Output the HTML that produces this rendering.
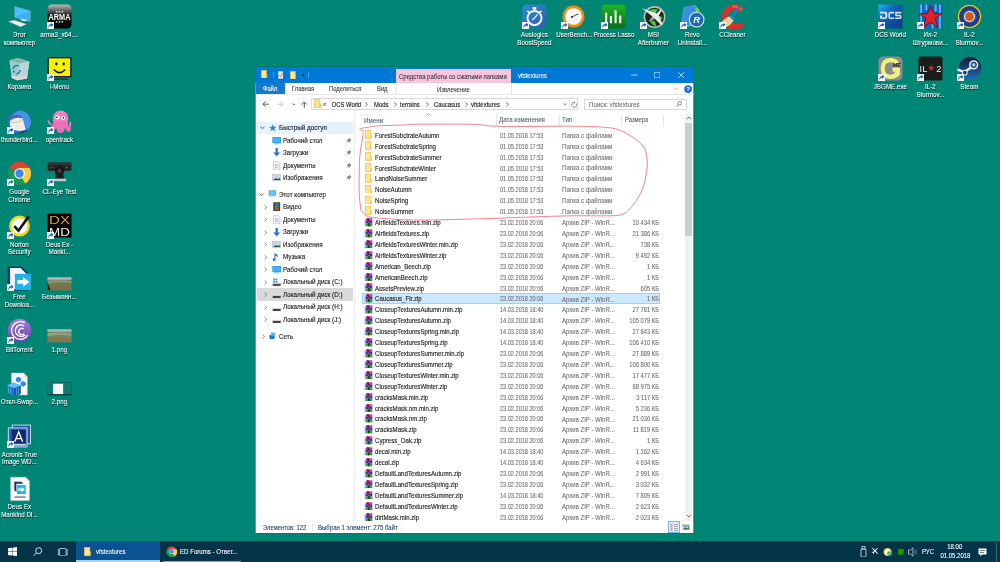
<!DOCTYPE html>
<html><head><meta charset="utf-8"><title>vfstextures</title>
<style>
html,body{margin:0;padding:0;}
body{width:1000px;height:562px;overflow:hidden;background:#018574;position:relative;font-family:'Liberation Sans', sans-serif;}
.b{position:absolute;display:block;}
.t{position:absolute;white-space:nowrap;font-family:'Liberation Sans', sans-serif;}
</style></head><body>
<div style="position:absolute;left:0;top:0;width:1000px;height:562px;will-change:transform">
<svg class="b" style="left:7.30px;top:3.60px" width="25.00" height="25.00" viewBox="0 0 48 48"><path d="M14.5 4.5 L45 13 V34 L14.5 25.5 Z" fill="#3fb4f8" stroke="#9a9a9a" stroke-width="0.8"/><path d="M16 6.5 L43.5 14.2 V32 L16 24.3 Z" fill="#49c0fc"/><path d="M16 24.3 L43.5 14.2 V32 Z" fill="#3ab0f2"/><path d="M3 33.5 L14 31 L37 39 L26 43.5 Z" fill="#ececec" stroke="#c8c8c8" stroke-width="0.6"/><path d="M24 30 L31 28.5 L40 31.5 L33 33 Z" fill="#e6e6e6"/></svg>
<div class="t" style="left:-2.60px;width:44.80px;text-align:center;transform:scaleX(0.8929);transform-origin:50% 0;top:30.98px;font-size:7.00px;line-height:7.00px;color:#fff;-webkit-text-stroke:0.08px #fff;text-shadow:0.4px 0.5px 0.8px rgba(0,0,0,.85);">Этот</div>
<div class="t" style="left:-2.60px;width:44.80px;text-align:center;transform:scaleX(0.8929);transform-origin:50% 0;top:38.68px;font-size:7.00px;line-height:7.00px;color:#fff;-webkit-text-stroke:0.08px #fff;text-shadow:0.4px 0.5px 0.8px rgba(0,0,0,.85);">компьютер</div>
<svg class="b" style="left:7.30px;top:56.05px" width="25.00" height="25.00" viewBox="0 0 48 48"><path d="M4.5 8 L21 4 L43 10.5 L38.5 43 L19 46.5 L9 42 Z" fill="#9fcbc4"/><path d="M4.5 8 L21 4 L43 10.5 L25 14 Z" fill="#7fb8b0"/><path d="M25 14 L43 10.5 L38.5 43 L19 46.5 Z" fill="#b5d8d2"/><path d="M9 36 L19 40 L38.5 37 L38.5 43 L19 46.5 L9 42 Z" fill="#e0d6d6"/><path d="M12 25 A7 7 0 0 1 22 19 M25 27 A7 7 0 0 1 18 34 M14 32 L12 28" stroke="#1f7de0" stroke-width="3.2" fill="none"/></svg>
<div class="t" style="left:-2.60px;width:44.80px;text-align:center;transform:scaleX(0.8929);transform-origin:50% 0;top:83.43px;font-size:7.00px;line-height:7.00px;color:#fff;-webkit-text-stroke:0.08px #fff;text-shadow:0.4px 0.5px 0.8px rgba(0,0,0,.85);">Корзина</div>
<svg class="b" style="left:7.30px;top:108.50px" width="25.00" height="25.00" viewBox="0 0 48 48"><circle cx="24" cy="25" r="22" fill="#2f6fc8"/><path d="M24 3 A22 22 0 0 1 40 40 Q30 30 28 14 Q20 8 12 14 Q10 8 24 3 Z" fill="#4b93e0"/><path d="M40 40 A22 22 0 0 1 20 46.5 Q34 42 40 40 Z" fill="#173f8f"/><path d="M6 22 Q16 14 30 18 L36 40 Q26 44 10 40 Q4 32 6 22 Z" fill="#f1ede4"/><path d="M6 24 Q18 30 30 20" stroke="#cfc8bb" stroke-width="2" fill="none"/><circle cx="15" cy="14" r="1.5" fill="#c33"/></svg>
<svg class="b" style="left:7.00px;top:126.70px" width="7.00" height="7.00" viewBox="0 0 12 12"><rect x="0" y="0" width="12" height="12" fill="#fff"/><path d="M2 11 C2 5.5 4.5 3.5 7.5 3.5 V1 L11 4.8 L7.5 8.6 V6 C5 6 3.5 7.5 2 11 Z" fill="#1a5cc8"/></svg>
<div class="t" style="left:-2.60px;width:44.80px;text-align:center;transform:scaleX(0.8929);transform-origin:50% 0;top:135.88px;font-size:7.00px;line-height:7.00px;color:#fff;-webkit-text-stroke:0.08px #fff;text-shadow:0.4px 0.5px 0.8px rgba(0,0,0,.85);">thunderbird...</div>
<svg class="b" style="left:7.30px;top:160.95px" width="25.00" height="25.00" viewBox="0 0 48 48"><circle cx="24" cy="24" r="22" fill="#db4437"/><path d="M24 24 L43.05 35 A22 22 0 0 1 13 43.05 Z" fill="#0f9d58"/><path d="M24 24 L13 43.05 A22 22 0 0 1 4.95 13 L24 13 Z" fill="#0f9d58"/><path d="M24 13 H43.05 A22 22 0 0 1 35 43.05 L24 24 Z" fill="#ffcd40"/><path d="M24 2 A22 22 0 0 1 43.05 13 H24 A11 11 0 0 0 14.5 18.5 L4.95 13 A22 22 0 0 1 24 2 Z" fill="#db4437"/><circle cx="24" cy="24" r="10" fill="#fff"/><circle cx="24" cy="24" r="8" fill="#4285f4"/></svg>
<svg class="b" style="left:7.00px;top:179.15px" width="7.00" height="7.00" viewBox="0 0 12 12"><rect x="0" y="0" width="12" height="12" fill="#fff"/><path d="M2 11 C2 5.5 4.5 3.5 7.5 3.5 V1 L11 4.8 L7.5 8.6 V6 C5 6 3.5 7.5 2 11 Z" fill="#1a5cc8"/></svg>
<div class="t" style="left:-2.60px;width:44.80px;text-align:center;transform:scaleX(0.8929);transform-origin:50% 0;top:188.33px;font-size:7.00px;line-height:7.00px;color:#fff;-webkit-text-stroke:0.08px #fff;text-shadow:0.4px 0.5px 0.8px rgba(0,0,0,.85);">Google</div>
<div class="t" style="left:-2.60px;width:44.80px;text-align:center;transform:scaleX(0.8929);transform-origin:50% 0;top:196.03px;font-size:7.00px;line-height:7.00px;color:#fff;-webkit-text-stroke:0.08px #fff;text-shadow:0.4px 0.5px 0.8px rgba(0,0,0,.85);">Chrome</div>
<svg class="b" style="left:7.30px;top:213.40px" width="25.00" height="25.00" viewBox="0 0 48 48"><circle cx="24" cy="25" r="20" fill="#f8d51a"/><circle cx="24" cy="25" r="15" fill="#fff"/><path d="M14 25 L22 34 L42 6" stroke="#111" stroke-width="5" fill="none"/></svg>
<svg class="b" style="left:7.00px;top:231.60px" width="7.00" height="7.00" viewBox="0 0 12 12"><rect x="0" y="0" width="12" height="12" fill="#fff"/><path d="M2 11 C2 5.5 4.5 3.5 7.5 3.5 V1 L11 4.8 L7.5 8.6 V6 C5 6 3.5 7.5 2 11 Z" fill="#1a5cc8"/></svg>
<div class="t" style="left:-2.60px;width:44.80px;text-align:center;transform:scaleX(0.8929);transform-origin:50% 0;top:240.78px;font-size:7.00px;line-height:7.00px;color:#fff;-webkit-text-stroke:0.08px #fff;text-shadow:0.4px 0.5px 0.8px rgba(0,0,0,.85);">Norton</div>
<div class="t" style="left:-2.60px;width:44.80px;text-align:center;transform:scaleX(0.8929);transform-origin:50% 0;top:248.48px;font-size:7.00px;line-height:7.00px;color:#fff;-webkit-text-stroke:0.08px #fff;text-shadow:0.4px 0.5px 0.8px rgba(0,0,0,.85);">Security</div>
<svg class="b" style="left:7.30px;top:265.85px" width="25.00" height="25.00" viewBox="0 0 48 48"><path d="M1 1 H28 L39 12 V47 H1 Z" fill="#0d3a78"/><path d="M6 4 H26 L38 16 V44 H6 Z" fill="#f4f8fb"/><rect x="15" y="15" width="31" height="31" fill="#1fb6e6"/><path d="M20 27 H31 V21 L43 30.5 L31 40 V34 H20 Z" fill="#fff"/></svg>
<svg class="b" style="left:7.00px;top:284.05px" width="7.00" height="7.00" viewBox="0 0 12 12"><rect x="0" y="0" width="12" height="12" fill="#fff"/><path d="M2 11 C2 5.5 4.5 3.5 7.5 3.5 V1 L11 4.8 L7.5 8.6 V6 C5 6 3.5 7.5 2 11 Z" fill="#1a5cc8"/></svg>
<div class="t" style="left:-2.60px;width:44.80px;text-align:center;transform:scaleX(0.8929);transform-origin:50% 0;top:293.23px;font-size:7.00px;line-height:7.00px;color:#fff;-webkit-text-stroke:0.08px #fff;text-shadow:0.4px 0.5px 0.8px rgba(0,0,0,.85);">Free</div>
<div class="t" style="left:-2.60px;width:44.80px;text-align:center;transform:scaleX(0.8929);transform-origin:50% 0;top:300.93px;font-size:7.00px;line-height:7.00px;color:#fff;-webkit-text-stroke:0.08px #fff;text-shadow:0.4px 0.5px 0.8px rgba(0,0,0,.85);">Downloa...</div>
<svg class="b" style="left:7.30px;top:318.30px" width="25.00" height="25.00" viewBox="0 0 48 48"><defs><linearGradient id="bg" x1="0" y1="0" x2="0" y2="1"><stop offset="0" stop-color="#a27ad8"/><stop offset="1" stop-color="#6c44b0"/></linearGradient></defs><circle cx="24" cy="24" r="22.5" fill="url(#bg)"/><path d="M34 9 A17 17 0 1 0 40 33" stroke="#fff" stroke-width="2.6" fill="none"/><path d="M33 15 A11 11 0 1 0 35 32" stroke="#fff" stroke-width="2.6" fill="none"/><path d="M32 21 A6 6 0 1 0 33 30" stroke="#fff" stroke-width="2.6" fill="none"/></svg>
<svg class="b" style="left:7.00px;top:336.50px" width="7.00" height="7.00" viewBox="0 0 12 12"><rect x="0" y="0" width="12" height="12" fill="#fff"/><path d="M2 11 C2 5.5 4.5 3.5 7.5 3.5 V1 L11 4.8 L7.5 8.6 V6 C5 6 3.5 7.5 2 11 Z" fill="#1a5cc8"/></svg>
<div class="t" style="left:-2.60px;width:44.80px;text-align:center;transform:scaleX(0.8929);transform-origin:50% 0;top:345.68px;font-size:7.00px;line-height:7.00px;color:#fff;-webkit-text-stroke:0.08px #fff;text-shadow:0.4px 0.5px 0.8px rgba(0,0,0,.85);">BitTorrent</div>
<svg class="b" style="left:7.30px;top:370.75px" width="25.00" height="25.00" viewBox="0 0 48 48"><path d="M8.5 4 H32 L39 11 V46 H8.5 Z" fill="#f7f7f7" stroke="#d8d0d0" stroke-width="0.8"/><path d="M32 4 V11 H39 Z" fill="#dcdcdc"/><path d="M0 28 L12 22 L26 28 V44 L14 48 L0 43 Z" fill="#1f6fc8"/><path d="M0 28 L12 22 L26 28 L14 33 Z" fill="#5cc3f5"/><path d="M14 33 L26 28 V44 L14 48 Z" fill="#1750a8"/><path d="M3 31 V42 M7 32.5 V44 M18 31.5 V46 M22 30 V45" stroke="#7fd3f8" stroke-width="1.5" opacity=".7"/><path d="M17 14 L22 11 L27 14 V19 L22 22 L17 19 Z" fill="#2d8ae0"/><path d="M26 22 L31 19 L36 22 V27 L31 30 L26 27 Z" fill="#2d8ae0"/></svg>
<div class="t" style="left:-2.60px;width:44.80px;text-align:center;transform:scaleX(0.8929);transform-origin:50% 0;top:398.13px;font-size:7.00px;line-height:7.00px;color:#fff;-webkit-text-stroke:0.08px #fff;text-shadow:0.4px 0.5px 0.8px rgba(0,0,0,.85);">Откл-Swap...</div>
<svg class="b" style="left:7.30px;top:423.20px" width="25.00" height="25.00" viewBox="0 0 48 48"><rect x="10" y="4" width="35" height="36" fill="#1f56a8" stroke="#e8eef5" stroke-width="1.6"/><rect x="2.5" y="9.5" width="36" height="36.5" fill="#2a64b8" stroke="#e8eef5" stroke-width="1.6"/><rect x="9" y="13" width="27" height="26" fill="#0f2a6e"/><path d="M15 36 L22.5 17 L30 36 M18 30 H27" stroke="#fff" stroke-width="2.6" fill="none"/><rect x="6" y="40.5" width="30" height="3" fill="#d6e2f0"/></svg>
<svg class="b" style="left:7.00px;top:441.40px" width="7.00" height="7.00" viewBox="0 0 12 12"><rect x="0" y="0" width="12" height="12" fill="#fff"/><path d="M2 11 C2 5.5 4.5 3.5 7.5 3.5 V1 L11 4.8 L7.5 8.6 V6 C5 6 3.5 7.5 2 11 Z" fill="#1a5cc8"/></svg>
<div class="t" style="left:-2.60px;width:44.80px;text-align:center;transform:scaleX(0.8929);transform-origin:50% 0;top:450.58px;font-size:7.00px;line-height:7.00px;color:#fff;-webkit-text-stroke:0.08px #fff;text-shadow:0.4px 0.5px 0.8px rgba(0,0,0,.85);">Acronis True</div>
<div class="t" style="left:-2.60px;width:44.80px;text-align:center;transform:scaleX(0.8929);transform-origin:50% 0;top:458.28px;font-size:7.00px;line-height:7.00px;color:#fff;-webkit-text-stroke:0.08px #fff;text-shadow:0.4px 0.5px 0.8px rgba(0,0,0,.85);">Image WD...</div>
<svg class="b" style="left:7.30px;top:475.65px" width="25.00" height="25.00" viewBox="0 0 48 48"><path d="M7 2.5 H36 L43 9.5 V47 H7 Z" fill="#fafafa" stroke="#dedede" stroke-width="0.8"/><path d="M36 2.5 V9.5 H43 Z" fill="#e0e0e0"/><path d="M14 11 H28 L31 15 H18 V31 L14 27 Z" fill="#0d3a78"/><rect x="19.5" y="17.5" width="16.5" height="17" fill="#1fb6e6"/><path d="M21 24 H28 V21 L34 26 L28 31 V28 H21 Z" fill="#fff"/><rect x="14.5" y="39.5" width="21.5" height="1.8" fill="#2a3a5a"/></svg>
<div class="t" style="left:-2.60px;width:44.80px;text-align:center;transform:scaleX(0.8929);transform-origin:50% 0;top:503.03px;font-size:7.00px;line-height:7.00px;color:#fff;-webkit-text-stroke:0.08px #fff;text-shadow:0.4px 0.5px 0.8px rgba(0,0,0,.85);">Deus Ex</div>
<div class="t" style="left:-2.60px;width:44.80px;text-align:center;transform:scaleX(0.8929);transform-origin:50% 0;top:510.73px;font-size:7.00px;line-height:7.00px;color:#fff;-webkit-text-stroke:0.08px #fff;text-shadow:0.4px 0.5px 0.8px rgba(0,0,0,.85);">Mankind Di...</div>
<svg class="b" style="left:46.88px;top:3.60px" width="25.00" height="25.00" viewBox="0 0 48 48"><defs><linearGradient id="ag" x1="0" y1="0" x2="0" y2="1"><stop offset="0" stop-color="#bdbdbd"/><stop offset="0.45" stop-color="#1a1a1a"/><stop offset="1" stop-color="#000"/></linearGradient></defs><rect x="1" y="1" width="46" height="46" rx="8" fill="url(#ag)"/><text x="24" y="30" font-size="17" font-weight="bold" text-anchor="middle" fill="#fff" font-family="Liberation Sans" textLength="42" lengthAdjust="spacingAndGlyphs">ARMA</text><path d="M17 14 h3 v2.5 h-3z M22.5 14 h3 v2.5 h-3z M28 14 h3 v2.5 h-3z M17 33 h3 v2.5 h-3z M22.5 33 h3 v2.5 h-3z M28 33 h3 v2.5 h-3z" fill="#fff"/></svg>
<svg class="b" style="left:46.58px;top:21.80px" width="7.00" height="7.00" viewBox="0 0 12 12"><rect x="0" y="0" width="12" height="12" fill="#fff"/><path d="M2 11 C2 5.5 4.5 3.5 7.5 3.5 V1 L11 4.8 L7.5 8.6 V6 C5 6 3.5 7.5 2 11 Z" fill="#1a5cc8"/></svg>
<div class="t" style="left:36.98px;width:44.80px;text-align:center;transform:scaleX(0.8929);transform-origin:50% 0;top:30.98px;font-size:7.00px;line-height:7.00px;color:#fff;-webkit-text-stroke:0.08px #fff;text-shadow:0.4px 0.5px 0.8px rgba(0,0,0,.85);">arma3_x64....</div>
<svg class="b" style="left:46.88px;top:56.05px" width="25.00" height="25.00" viewBox="0 0 48 48"><rect x="1" y="2" width="46" height="39" rx="2" fill="#111"/><rect x="3.5" y="4.5" width="41" height="34" fill="#f5f200"/><ellipse cx="18" cy="15" rx="2.3" ry="3.2" fill="#111"/><ellipse cx="32" cy="15" rx="2.3" ry="3.2" fill="#111"/><path d="M13 26 Q24 38 35 26" stroke="#111" stroke-width="2.8" fill="none"/><rect x="14" y="43" width="26" height="2.5" fill="#2a2a2a"/></svg>
<svg class="b" style="left:46.58px;top:74.25px" width="7.00" height="7.00" viewBox="0 0 12 12"><rect x="0" y="0" width="12" height="12" fill="#fff"/><path d="M2 11 C2 5.5 4.5 3.5 7.5 3.5 V1 L11 4.8 L7.5 8.6 V6 C5 6 3.5 7.5 2 11 Z" fill="#1a5cc8"/></svg>
<div class="t" style="left:36.98px;width:44.80px;text-align:center;transform:scaleX(0.8929);transform-origin:50% 0;top:83.43px;font-size:7.00px;line-height:7.00px;color:#fff;-webkit-text-stroke:0.08px #fff;text-shadow:0.4px 0.5px 0.8px rgba(0,0,0,.85);">i-Menu</div>
<svg class="b" style="left:46.88px;top:108.50px" width="25.00" height="25.00" viewBox="0 0 48 48"><ellipse cx="26" cy="18" rx="15" ry="15" fill="#f27cc0"/><path d="M12 24 Q10 34 4 36 Q4 44 14 42 Q16 38 18 36 Q18 46 26 46 Q34 46 34 36 Q36 40 40 44 Q47 44 46 36 Q40 34 40 24 Z" fill="#ee6db8"/><path d="M2 22 Q4 28 8 30 M44 24 Q46 30 44 34" stroke="#f48ac8" stroke-width="3" fill="none"/><circle cx="20" cy="16" r="4.2" fill="#fff"/><circle cx="31" cy="17" r="3.8" fill="#fff"/><circle cx="19" cy="16" r="1.6" fill="#111"/><circle cx="31.5" cy="17" r="1.5" fill="#111"/></svg>
<svg class="b" style="left:46.58px;top:126.70px" width="7.00" height="7.00" viewBox="0 0 12 12"><rect x="0" y="0" width="12" height="12" fill="#fff"/><path d="M2 11 C2 5.5 4.5 3.5 7.5 3.5 V1 L11 4.8 L7.5 8.6 V6 C5 6 3.5 7.5 2 11 Z" fill="#1a5cc8"/></svg>
<div class="t" style="left:36.98px;width:44.80px;text-align:center;transform:scaleX(0.8929);transform-origin:50% 0;top:135.88px;font-size:7.00px;line-height:7.00px;color:#fff;-webkit-text-stroke:0.08px #fff;text-shadow:0.4px 0.5px 0.8px rgba(0,0,0,.85);">opentrack</div>
<svg class="b" style="left:46.88px;top:160.95px" width="25.00" height="25.00" viewBox="0 0 48 48"><path d="M1 6 Q1 3 5 3 H43 Q47 3 47 6 V16 Q47 19 43 19 H5 Q1 19 1 16 Z" fill="#262626"/><rect x="1" y="3" width="46" height="4" fill="#3a3a3a"/><circle cx="24" cy="19" r="9" fill="#151515"/><circle cx="24" cy="19" r="4.5" fill="#3d3d3d"/><rect x="16" y="26" width="16" height="8" fill="#1e1e1e"/><rect x="11" y="34" width="26" height="5" rx="2" fill="#c8c8c8"/><circle cx="9" cy="12" r="1.3" fill="#e33"/><circle cx="38" cy="12" r="1.3" fill="#39f"/></svg>
<svg class="b" style="left:46.58px;top:179.15px" width="7.00" height="7.00" viewBox="0 0 12 12"><rect x="0" y="0" width="12" height="12" fill="#fff"/><path d="M2 11 C2 5.5 4.5 3.5 7.5 3.5 V1 L11 4.8 L7.5 8.6 V6 C5 6 3.5 7.5 2 11 Z" fill="#1a5cc8"/></svg>
<div class="t" style="left:36.98px;width:44.80px;text-align:center;transform:scaleX(0.8929);transform-origin:50% 0;top:188.33px;font-size:7.00px;line-height:7.00px;color:#fff;-webkit-text-stroke:0.08px #fff;text-shadow:0.4px 0.5px 0.8px rgba(0,0,0,.85);">CL-Eye Test</div>
<svg class="b" style="left:46.88px;top:213.40px" width="25.00" height="25.00" viewBox="0 0 48 48"><rect x="1" y="1" width="46" height="46" fill="#050505"/><text x="24" y="22" font-size="22" text-anchor="middle" fill="#d9a441" font-family="Liberation Sans" textLength="40" lengthAdjust="spacingAndGlyphs">DX</text><text x="24" y="44" font-size="22" text-anchor="middle" fill="#f2f2f2" font-family="Liberation Sans" textLength="40" lengthAdjust="spacingAndGlyphs">MD</text></svg>
<svg class="b" style="left:46.58px;top:231.60px" width="7.00" height="7.00" viewBox="0 0 12 12"><rect x="0" y="0" width="12" height="12" fill="#fff"/><path d="M2 11 C2 5.5 4.5 3.5 7.5 3.5 V1 L11 4.8 L7.5 8.6 V6 C5 6 3.5 7.5 2 11 Z" fill="#1a5cc8"/></svg>
<div class="t" style="left:36.98px;width:44.80px;text-align:center;transform:scaleX(0.8929);transform-origin:50% 0;top:240.78px;font-size:7.00px;line-height:7.00px;color:#fff;-webkit-text-stroke:0.08px #fff;text-shadow:0.4px 0.5px 0.8px rgba(0,0,0,.85);">Deus Ex -</div>
<div class="t" style="left:36.98px;width:44.80px;text-align:center;transform:scaleX(0.8929);transform-origin:50% 0;top:248.48px;font-size:7.00px;line-height:7.00px;color:#fff;-webkit-text-stroke:0.08px #fff;text-shadow:0.4px 0.5px 0.8px rgba(0,0,0,.85);">Manki...</div>
<svg class="b" style="left:46.88px;top:265.85px" width="25.00" height="25.00" viewBox="0 0 48 48"><rect x="1" y="21.5" width="46" height="25" fill="#6e7a55"/><rect x="1" y="21.5" width="46" height="5" fill="#a9b5b8"/><path d="M1 28 Q20 25 47 29 V33 Q24 30 1 34 Z" fill="#8a9470"/><path d="M1 38 Q22 35 47 40 V46.5 H1 Z" fill="#7d7048"/><path d="M1 30 L7 46.5 H1 Z" fill="#3a2415"/></svg>
<div class="t" style="left:36.98px;width:44.80px;text-align:center;transform:scaleX(0.8929);transform-origin:50% 0;top:293.23px;font-size:7.00px;line-height:7.00px;color:#fff;-webkit-text-stroke:0.08px #fff;text-shadow:0.4px 0.5px 0.8px rgba(0,0,0,.85);">Безымянн...</div>
<svg class="b" style="left:46.88px;top:318.30px" width="25.00" height="25.00" viewBox="0 0 48 48"><rect x="1" y="21.5" width="46" height="25" fill="#77845d"/><rect x="1" y="21.5" width="46" height="5" fill="#a5b4bb"/><path d="M1 29 Q24 26 47 30 V34 Q24 31 1 35 Z" fill="#93a07a"/><path d="M1 39 Q22 36 47 41 V46.5 H1 Z" fill="#827552"/></svg>
<div class="t" style="left:36.98px;width:44.80px;text-align:center;transform:scaleX(0.8929);transform-origin:50% 0;top:345.68px;font-size:7.00px;line-height:7.00px;color:#fff;-webkit-text-stroke:0.08px #fff;text-shadow:0.4px 0.5px 0.8px rgba(0,0,0,.85);">1.png</div>
<svg class="b" style="left:46.88px;top:370.75px" width="25.00" height="25.00" viewBox="0 0 48 48"><rect x="0.5" y="21.5" width="46" height="25" fill="#0a7d6c" stroke="#0b5d55" stroke-width="1"/><rect x="11.5" y="24.5" width="19.5" height="20" fill="#f8f8f8"/><rect x="0.5" y="44.5" width="46" height="2" fill="#0b3b48"/></svg>
<div class="t" style="left:36.98px;width:44.80px;text-align:center;transform:scaleX(0.8929);transform-origin:50% 0;top:398.13px;font-size:7.00px;line-height:7.00px;color:#fff;-webkit-text-stroke:0.08px #fff;text-shadow:0.4px 0.5px 0.8px rgba(0,0,0,.85);">2.png</div>
<svg class="b" style="left:521.84px;top:3.60px" width="25.00" height="25.00" viewBox="0 0 48 48"><defs><linearGradient id="au" x1="0" y1="0" x2="1" y2="1"><stop offset="0" stop-color="#2f8ad6"/><stop offset="1" stop-color="#2a5fa8"/></linearGradient></defs><rect x="1" y="1" width="46" height="46" rx="8" fill="url(#au)"/><circle cx="24" cy="27" r="13.5" stroke="#fff" stroke-width="3.6" fill="none"/><rect x="20.5" y="6" width="7" height="4" fill="#fff"/><rect x="22.5" y="9" width="3" height="4" fill="#fff"/><path d="M10.5 13 L14 16.5 M37.5 13 L34 16.5" stroke="#fff" stroke-width="3"/><path d="M20 31 L30 20" stroke="#fff" stroke-width="2.6"/></svg>
<svg class="b" style="left:521.54px;top:21.80px" width="7.00" height="7.00" viewBox="0 0 12 12"><rect x="0" y="0" width="12" height="12" fill="#fff"/><path d="M2 11 C2 5.5 4.5 3.5 7.5 3.5 V1 L11 4.8 L7.5 8.6 V6 C5 6 3.5 7.5 2 11 Z" fill="#1a5cc8"/></svg>
<div class="t" style="left:511.94px;width:44.80px;text-align:center;transform:scaleX(0.8929);transform-origin:50% 0;top:30.98px;font-size:7.00px;line-height:7.00px;color:#fff;-webkit-text-stroke:0.08px #fff;text-shadow:0.4px 0.5px 0.8px rgba(0,0,0,.85);">Auslogics</div>
<div class="t" style="left:511.94px;width:44.80px;text-align:center;transform:scaleX(0.8929);transform-origin:50% 0;top:38.68px;font-size:7.00px;line-height:7.00px;color:#fff;-webkit-text-stroke:0.08px #fff;text-shadow:0.4px 0.5px 0.8px rgba(0,0,0,.85);">BoostSpeed</div>
<svg class="b" style="left:561.42px;top:3.60px" width="25.00" height="25.00" viewBox="0 0 48 48"><circle cx="24" cy="24" r="21" fill="#f58a0c"/><circle cx="24" cy="24" r="16" fill="#fafafa"/><path d="M20 25 L34 19" stroke="#333" stroke-width="1.6"/><circle cx="21" cy="25" r="2" fill="#333"/></svg>
<svg class="b" style="left:561.12px;top:21.80px" width="7.00" height="7.00" viewBox="0 0 12 12"><rect x="0" y="0" width="12" height="12" fill="#fff"/><path d="M2 11 C2 5.5 4.5 3.5 7.5 3.5 V1 L11 4.8 L7.5 8.6 V6 C5 6 3.5 7.5 2 11 Z" fill="#1a5cc8"/></svg>
<div class="t" style="left:551.52px;width:44.80px;text-align:center;transform:scaleX(0.8929);transform-origin:50% 0;top:30.98px;font-size:7.00px;line-height:7.00px;color:#fff;-webkit-text-stroke:0.08px #fff;text-shadow:0.4px 0.5px 0.8px rgba(0,0,0,.85);">UserBench...</div>
<svg class="b" style="left:601.00px;top:3.60px" width="25.00" height="25.00" viewBox="0 0 48 48"><defs><linearGradient id="la" x1="0" y1="0" x2="0" y2="1"><stop offset="0" stop-color="#1fb52a"/><stop offset="1" stop-color="#0a6e16"/></linearGradient></defs><rect x="1" y="1" width="46" height="46" rx="7" fill="url(#la)"/><path d="M10 37 V17 M19 37 V23 M28 37 V12 M37 37 V22" stroke="#fff" stroke-width="3.8"/></svg>
<svg class="b" style="left:600.70px;top:21.80px" width="7.00" height="7.00" viewBox="0 0 12 12"><rect x="0" y="0" width="12" height="12" fill="#fff"/><path d="M2 11 C2 5.5 4.5 3.5 7.5 3.5 V1 L11 4.8 L7.5 8.6 V6 C5 6 3.5 7.5 2 11 Z" fill="#1a5cc8"/></svg>
<div class="t" style="left:591.10px;width:44.80px;text-align:center;transform:scaleX(0.8929);transform-origin:50% 0;top:30.98px;font-size:7.00px;line-height:7.00px;color:#fff;-webkit-text-stroke:0.08px #fff;text-shadow:0.4px 0.5px 0.8px rgba(0,0,0,.85);">Process Lasso</div>
<svg class="b" style="left:640.58px;top:3.60px" width="25.00" height="25.00" viewBox="0 0 48 48"><circle cx="26" cy="25" r="21" fill="#bdbdbd"/><circle cx="26" cy="25" r="18" fill="#1c2a1c"/><path d="M14 14 Q22 8 32 10 L26 22 Z M30 30 Q38 34 42 26 L34 22 Z M18 34 Q22 42 30 42 L26 32 Z" fill="#3fd43f"/><path d="M2 8 L30 18 L38 10 L40 12 L34 22 L42 40 L38 40 L26 28 L18 34 L16 32 L22 24 Z" fill="#e9e9e9"/><path d="M22 24 L26 28 L18 34 L16 32 Z" fill="#9a9a9a"/></svg>
<svg class="b" style="left:640.28px;top:21.80px" width="7.00" height="7.00" viewBox="0 0 12 12"><rect x="0" y="0" width="12" height="12" fill="#fff"/><path d="M2 11 C2 5.5 4.5 3.5 7.5 3.5 V1 L11 4.8 L7.5 8.6 V6 C5 6 3.5 7.5 2 11 Z" fill="#1a5cc8"/></svg>
<div class="t" style="left:630.68px;width:44.80px;text-align:center;transform:scaleX(0.8929);transform-origin:50% 0;top:30.98px;font-size:7.00px;line-height:7.00px;color:#fff;-webkit-text-stroke:0.08px #fff;text-shadow:0.4px 0.5px 0.8px rgba(0,0,0,.85);">MSI</div>
<div class="t" style="left:630.68px;width:44.80px;text-align:center;transform:scaleX(0.8929);transform-origin:50% 0;top:38.68px;font-size:7.00px;line-height:7.00px;color:#fff;-webkit-text-stroke:0.08px #fff;text-shadow:0.4px 0.5px 0.8px rgba(0,0,0,.85);">Afterburner</div>
<svg class="b" style="left:680.16px;top:3.60px" width="25.00" height="25.00" viewBox="0 0 48 48"><path d="M6 6 L30 2 L36 12 V40 L10 44 L4 34 Z" fill="#5fb0e8"/><path d="M6 6 L30 2 L30 38 L6 42 Z" fill="#3a8fd8"/><circle cx="32" cy="30" r="14" fill="#1b6ab3" stroke="#e8f0f8" stroke-width="2"/><text x="32" y="37" font-size="18" font-weight="bold" font-style="italic" text-anchor="middle" fill="#fff" font-family="Liberation Sans">R</text><path d="M30 8 Q38 10 36 18" stroke="#7ccf3f" stroke-width="3" fill="none"/></svg>
<svg class="b" style="left:679.86px;top:21.80px" width="7.00" height="7.00" viewBox="0 0 12 12"><rect x="0" y="0" width="12" height="12" fill="#fff"/><path d="M2 11 C2 5.5 4.5 3.5 7.5 3.5 V1 L11 4.8 L7.5 8.6 V6 C5 6 3.5 7.5 2 11 Z" fill="#1a5cc8"/></svg>
<div class="t" style="left:670.26px;width:44.80px;text-align:center;transform:scaleX(0.8929);transform-origin:50% 0;top:30.98px;font-size:7.00px;line-height:7.00px;color:#fff;-webkit-text-stroke:0.08px #fff;text-shadow:0.4px 0.5px 0.8px rgba(0,0,0,.85);">Revo</div>
<div class="t" style="left:670.26px;width:44.80px;text-align:center;transform:scaleX(0.8929);transform-origin:50% 0;top:38.68px;font-size:7.00px;line-height:7.00px;color:#fff;-webkit-text-stroke:0.08px #fff;text-shadow:0.4px 0.5px 0.8px rgba(0,0,0,.85);">Uninstall...</div>
<svg class="b" style="left:719.74px;top:3.60px" width="25.00" height="25.00" viewBox="0 0 48 48"><path d="M42 12 A19 19 0 1 0 42 38" stroke="#d9302f" stroke-width="11" fill="none"/><path d="M42 12 A19 19 0 0 0 24 5" stroke="#f05a4a" stroke-width="5" fill="none"/><path d="M38 4 L22 28" stroke="#2d74c8" stroke-width="4"/><path d="M2 36 Q10 26 18 24 L26 32 Q20 42 8 46 Z" fill="#ecd09a"/><path d="M18 24 L26 32 L28 28 L22 22 Z" fill="#3b7fd0"/></svg>
<svg class="b" style="left:719.44px;top:21.80px" width="7.00" height="7.00" viewBox="0 0 12 12"><rect x="0" y="0" width="12" height="12" fill="#fff"/><path d="M2 11 C2 5.5 4.5 3.5 7.5 3.5 V1 L11 4.8 L7.5 8.6 V6 C5 6 3.5 7.5 2 11 Z" fill="#1a5cc8"/></svg>
<div class="t" style="left:709.84px;width:44.80px;text-align:center;transform:scaleX(0.8929);transform-origin:50% 0;top:30.98px;font-size:7.00px;line-height:7.00px;color:#fff;-webkit-text-stroke:0.08px #fff;text-shadow:0.4px 0.5px 0.8px rgba(0,0,0,.85);">CCleaner</div>
<svg class="b" style="left:878.06px;top:3.60px" width="25.00" height="25.00" viewBox="0 0 48 48"><defs><linearGradient id="dg" x1="0" y1="0" x2="1" y2="1"><stop offset="0" stop-color="#22b0f5"/><stop offset="0.45" stop-color="#0d5bb0"/><stop offset="1" stop-color="#0a3d86"/></linearGradient></defs><rect x="1" y="1" width="46" height="46" fill="url(#dg)"/><path d="M4 15 H14 Q18 15 18 19 V24 Q18 29 14 29 H6 Q4 29 4 27 V22 H8 V26 H13 Q14 26 14 25 V19 Q14 18 13 18 H4 Z" fill="#d8dde4"/><path d="M20 19 Q20 15 24 15 H31 V18 H24 Q23 18 23 19 V25 Q23 26 24 26 H31 V29 H24 Q20 29 20 25 Z" fill="#d8dde4"/><path d="M33 15 H45 V18 H36 V20.5 H43 Q45 20.5 45 23 V26 Q45 29 42 29 H33 V26 H42 V23.5 H35 Q33 23.5 33 21 Z" fill="#d8dde4"/></svg>
<svg class="b" style="left:877.76px;top:21.80px" width="7.00" height="7.00" viewBox="0 0 12 12"><rect x="0" y="0" width="12" height="12" fill="#fff"/><path d="M2 11 C2 5.5 4.5 3.5 7.5 3.5 V1 L11 4.8 L7.5 8.6 V6 C5 6 3.5 7.5 2 11 Z" fill="#1a5cc8"/></svg>
<div class="t" style="left:868.16px;width:44.80px;text-align:center;transform:scaleX(0.8929);transform-origin:50% 0;top:30.98px;font-size:7.00px;line-height:7.00px;color:#fff;-webkit-text-stroke:0.08px #fff;text-shadow:0.4px 0.5px 0.8px rgba(0,0,0,.85);">DCS World</div>
<svg class="b" style="left:917.64px;top:3.60px" width="25.00" height="25.00" viewBox="0 0 48 48"><rect x="1" y="1" width="46" height="46" fill="#1466c0"/><path d="M6 1 V47 M16 1 V12 M34 1 V14 M42 1 V47 M28 38 V47" stroke="#5ab8f5" stroke-width="3.5"/><path d="M24 3 L29.8 18.5 H46 L33 28 L38 45 L24 35 L10 45 L15 28 L2 18.5 H18.2 Z" fill="#e3212a" stroke="#3a0a0a" stroke-width="1.2"/></svg>
<svg class="b" style="left:917.34px;top:21.80px" width="7.00" height="7.00" viewBox="0 0 12 12"><rect x="0" y="0" width="12" height="12" fill="#fff"/><path d="M2 11 C2 5.5 4.5 3.5 7.5 3.5 V1 L11 4.8 L7.5 8.6 V6 C5 6 3.5 7.5 2 11 Z" fill="#1a5cc8"/></svg>
<div class="t" style="left:907.74px;width:44.80px;text-align:center;transform:scaleX(0.8929);transform-origin:50% 0;top:30.98px;font-size:7.00px;line-height:7.00px;color:#fff;-webkit-text-stroke:0.08px #fff;text-shadow:0.4px 0.5px 0.8px rgba(0,0,0,.85);">Ил-2</div>
<div class="t" style="left:907.74px;width:44.80px;text-align:center;transform:scaleX(0.8929);transform-origin:50% 0;top:38.68px;font-size:7.00px;line-height:7.00px;color:#fff;-webkit-text-stroke:0.08px #fff;text-shadow:0.4px 0.5px 0.8px rgba(0,0,0,.85);">Штурмови...</div>
<svg class="b" style="left:957.22px;top:3.60px" width="25.00" height="25.00" viewBox="0 0 48 48"><circle cx="24" cy="24" r="22.5" fill="#f2c300"/><circle cx="24" cy="24" r="20" fill="#1d3c8c"/><circle cx="24" cy="24" r="13" fill="#2d58b0"/><circle cx="24" cy="24" r="10.5" fill="#f4f4f4"/><circle cx="24" cy="24" r="8.5" fill="#d45a1e"/></svg>
<svg class="b" style="left:956.92px;top:21.80px" width="7.00" height="7.00" viewBox="0 0 12 12"><rect x="0" y="0" width="12" height="12" fill="#fff"/><path d="M2 11 C2 5.5 4.5 3.5 7.5 3.5 V1 L11 4.8 L7.5 8.6 V6 C5 6 3.5 7.5 2 11 Z" fill="#1a5cc8"/></svg>
<div class="t" style="left:947.32px;width:44.80px;text-align:center;transform:scaleX(0.8929);transform-origin:50% 0;top:30.98px;font-size:7.00px;line-height:7.00px;color:#fff;-webkit-text-stroke:0.08px #fff;text-shadow:0.4px 0.5px 0.8px rgba(0,0,0,.85);">IL-2</div>
<div class="t" style="left:947.32px;width:44.80px;text-align:center;transform:scaleX(0.8929);transform-origin:50% 0;top:38.68px;font-size:7.00px;line-height:7.00px;color:#fff;-webkit-text-stroke:0.08px #fff;text-shadow:0.4px 0.5px 0.8px rgba(0,0,0,.85);">Sturmov...</div>
<svg class="b" style="left:878.06px;top:56.05px" width="25.00" height="25.00" viewBox="0 0 48 48"><rect x="1" y="1" width="46" height="46" rx="9" fill="#8c8c8c"/><path d="M40 12 Q34 4 24 4 Q6 4 5 24 Q6 44 24 44 Q36 44 42 36 V22 H28 V30 H34 Q30 36 24 36 Q13 36 13 24 Q13 12 24 12 Q30 12 34 16 Z" fill="#f2f07e"/><text x="36" y="22" font-size="10" font-weight="bold" font-style="italic" text-anchor="middle" fill="#222" font-family="Liberation Sans">ME</text></svg>
<svg class="b" style="left:877.76px;top:74.25px" width="7.00" height="7.00" viewBox="0 0 12 12"><rect x="0" y="0" width="12" height="12" fill="#fff"/><path d="M2 11 C2 5.5 4.5 3.5 7.5 3.5 V1 L11 4.8 L7.5 8.6 V6 C5 6 3.5 7.5 2 11 Z" fill="#1a5cc8"/></svg>
<div class="t" style="left:868.16px;width:44.80px;text-align:center;transform:scaleX(0.8929);transform-origin:50% 0;top:83.43px;font-size:7.00px;line-height:7.00px;color:#fff;-webkit-text-stroke:0.08px #fff;text-shadow:0.4px 0.5px 0.8px rgba(0,0,0,.85);">JSGME.exe</div>
<svg class="b" style="left:917.64px;top:56.05px" width="25.00" height="25.00" viewBox="0 0 48 48"><rect x="1" y="1" width="46" height="46" rx="3" fill="#1c1c1c"/><text x="3" y="31" font-size="18" text-anchor="start" fill="#f2f2f2" font-family="Liberation Sans">IL</text><text x="45" y="31" font-size="18" text-anchor="end" fill="#f2f2f2" font-family="Liberation Sans">2</text><path d="M25.5 16 L27.3 21 H32 L28.2 24 L29.6 28.8 L25.5 25.8 L21.4 28.8 L22.8 24 L19 21 H23.7 Z" fill="#d9212a"/></svg>
<svg class="b" style="left:917.34px;top:74.25px" width="7.00" height="7.00" viewBox="0 0 12 12"><rect x="0" y="0" width="12" height="12" fill="#fff"/><path d="M2 11 C2 5.5 4.5 3.5 7.5 3.5 V1 L11 4.8 L7.5 8.6 V6 C5 6 3.5 7.5 2 11 Z" fill="#1a5cc8"/></svg>
<div class="t" style="left:907.74px;width:44.80px;text-align:center;transform:scaleX(0.8929);transform-origin:50% 0;top:83.43px;font-size:7.00px;line-height:7.00px;color:#fff;-webkit-text-stroke:0.08px #fff;text-shadow:0.4px 0.5px 0.8px rgba(0,0,0,.85);">IL-2</div>
<div class="t" style="left:907.74px;width:44.80px;text-align:center;transform:scaleX(0.8929);transform-origin:50% 0;top:91.13px;font-size:7.00px;line-height:7.00px;color:#fff;-webkit-text-stroke:0.08px #fff;text-shadow:0.4px 0.5px 0.8px rgba(0,0,0,.85);">Sturmov...</div>
<svg class="b" style="left:957.22px;top:56.05px" width="25.00" height="25.00" viewBox="0 0 48 48"><defs><linearGradient id="sg" x1="0" y1="0" x2="0" y2="1"><stop offset="0" stop-color="#111a3a"/><stop offset="1" stop-color="#1d6fb8"/></linearGradient></defs><circle cx="25" cy="24" r="22" fill="url(#sg)"/><circle cx="32" cy="17" r="7.5" fill="none" stroke="#dfe9f2" stroke-width="3"/><circle cx="32" cy="17" r="3.8" fill="#9cc3de"/><path d="M1 26 L14 31 L27 22" stroke="#dfe9f2" stroke-width="5" fill="none"/><circle cx="15" cy="32" r="4.5" fill="#173a6a" stroke="#dfe9f2" stroke-width="2"/></svg>
<svg class="b" style="left:956.92px;top:74.25px" width="7.00" height="7.00" viewBox="0 0 12 12"><rect x="0" y="0" width="12" height="12" fill="#fff"/><path d="M2 11 C2 5.5 4.5 3.5 7.5 3.5 V1 L11 4.8 L7.5 8.6 V6 C5 6 3.5 7.5 2 11 Z" fill="#1a5cc8"/></svg>
<div class="t" style="left:947.32px;width:44.80px;text-align:center;transform:scaleX(0.8929);transform-origin:50% 0;top:83.43px;font-size:7.00px;line-height:7.00px;color:#fff;-webkit-text-stroke:0.08px #fff;text-shadow:0.4px 0.5px 0.8px rgba(0,0,0,.85);">Steam</div>
<div class="b" style="left:254.50px;top:66.30px;width:440.00px;height:467.60px;background:rgba(0,60,50,.12);"></div>
<div class="b" style="left:255.00px;top:66.80px;width:439.00px;height:466.60px;background:#4a9be0;"></div>
<div class="b" style="left:255.55px;top:83.00px;width:437.90px;height:449.85px;background:#fff;"></div>
<div class="b" style="left:255.00px;top:66.80px;width:439.00px;height:16.20px;background:#0078d7;"></div>
<svg class="b" style="left:261.00px;top:70.20px" width="6.60" height="8.30" viewBox="0 0 16 20"><rect x="0.6" y="0.6" width="12.6" height="18.8" fill="#f7d25e" stroke="#ecc143" stroke-width="1.2"/><path d="M13.2 9.5 L15.4 11.5 V19.4 H13.2 Z" fill="#efbf3e"/><rect x="2.2" y="2.2" width="9.6" height="15.6" fill="#fde497"/></svg>
<div class="b" style="left:272.50px;top:71.50px;width:0.70px;height:6.00px;background:#4d9be0;"></div>
<svg class="b" style="left:278.30px;top:70.80px" width="5.20" height="7.80" viewBox="0 0 16 24"><rect x="1" y="1" width="14" height="22" fill="#fff" stroke="#c9c9c9"/><path d="M3 13 L7 18 L13 7" stroke="#e8692d" stroke-width="3" fill="none"/></svg>
<svg class="b" style="left:289.80px;top:70.60px" width="6.60" height="8.30" viewBox="0 0 16 20"><rect x="0.6" y="0.6" width="12.6" height="18.8" fill="#f7d25e" stroke="#ecc143" stroke-width="1.2"/><path d="M13.2 9.5 L15.4 11.5 V19.4 H13.2 Z" fill="#efbf3e"/><rect x="2.2" y="2.2" width="9.6" height="15.6" fill="#fde497"/></svg>
<svg class="b" style="left:300.50px;top:74.20px" width="3.60" height="2.80" viewBox="0 -2 8 8"><path d="M0 0 H8 L4 6 Z" fill="#0a2540"/><rect x="0" y="-2" width="8" height="1.2" fill="#0a2540"/></svg>
<div class="b" style="left:308.20px;top:71.50px;width:0.70px;height:6.00px;background:#4d9be0;"></div>
<div class="b" style="left:396.00px;top:68.80px;width:115.10px;height:14.20px;background:#f7c4de;"></div>
<div class="t" style="left:399.40px;transform:scaleX(0.8929);transform-origin:0 0;top:73.55px;font-size:6.70px;line-height:6.70px;color:#333;-webkit-text-stroke:0.08px #333;">Средства работы со сжатыми папками</div>
<div class="t" style="left:517.60px;transform:scaleX(0.8929);transform-origin:0 0;top:73.04px;font-size:6.72px;line-height:6.72px;color:#fff;-webkit-text-stroke:0.08px #fff;">vfstextures</div>
<svg class="b" style="left:631.00px;top:71.60px" width="6.50" height="6.00" viewBox="0 0 6.5 6"><path d="M0 3 H6.5" stroke="#fff" stroke-width="0.6"/></svg>
<svg class="b" style="left:654.00px;top:71.50px" width="6.40" height="6.40" viewBox="0 0 6.4 6.4"><rect x="0.5" y="0.5" width="5.4" height="5.4" stroke="rgba(255,255,255,.85)" stroke-width="0.55" fill="none"/></svg>
<svg class="b" style="left:678.30px;top:71.60px" width="6.40" height="6.40" viewBox="0 0 6.4 6.4"><path d="M0.3 0.3 L6.1 6.1 M6.1 0.3 L0.3 6.1" stroke="#fff" stroke-width="0.75"/></svg>
<div class="b" style="left:255.50px;top:83.00px;width:29.50px;height:11.60px;background:#1979ca;"></div>
<div class="t" style="left:262.80px;transform:scaleX(0.8929);transform-origin:0 0;top:86.42px;font-size:6.56px;line-height:6.56px;color:#fff;-webkit-text-stroke:0.08px #fff;">Файл</div>
<div class="t" style="left:291.70px;transform:scaleX(0.8929);transform-origin:0 0;top:86.42px;font-size:6.56px;line-height:6.56px;color:#333;-webkit-text-stroke:0.08px #333;">Главная</div>
<div class="t" style="left:329.00px;transform:scaleX(0.8929);transform-origin:0 0;top:86.41px;font-size:6.59px;line-height:6.59px;color:#333;-webkit-text-stroke:0.08px #333;">Поделиться</div>
<div class="t" style="left:376.50px;transform:scaleX(0.8929);transform-origin:0 0;top:86.46px;font-size:6.50px;line-height:6.50px;color:#333;-webkit-text-stroke:0.08px #333;">Вид</div>
<div class="b" style="left:396.00px;top:83.00px;width:0.50px;height:11.60px;background:#e6e6e6;"></div>
<div class="b" style="left:510.80px;top:83.00px;width:0.50px;height:11.60px;background:#e6e6e6;"></div>
<div class="t" style="left:436.80px;transform:scaleX(0.8929);transform-origin:0 0;top:86.99px;font-size:6.63px;line-height:6.63px;color:#333;-webkit-text-stroke:0.08px #333;">Извлечение</div>
<svg class="b" style="left:673.50px;top:86.80px" width="5.00" height="3.20" viewBox="0 0 5 3.2"><path d="M0.4 0.4 L2.5 2.6 L4.6 0.4" stroke="#9a9a9a" stroke-width="0.6" fill="none"/></svg>
<svg class="b" style="left:683.60px;top:84.60px" width="8.20" height="8.20" viewBox="0 0 8.2 8.2"><circle cx="4.1" cy="4.1" r="3.9" fill="#1a6fd0"/><text x="4.1" y="6.3" font-size="6" font-weight="bold" text-anchor="middle" fill="#fff" font-family="Liberation Sans">?</text></svg>
<div class="b" style="left:255.50px;top:94.40px;width:438.00px;height:0.60px;background:#e8e8e8;"></div>
<svg class="b" style="left:262.20px;top:101.00px" width="7.00" height="6.40" viewBox="0 0 7 6.4"><path d="M6.8 3.2 H0.9 M3.6 0.5 L0.9 3.2 L3.6 5.9" stroke="#555" stroke-width="0.95" fill="none"/></svg>
<svg class="b" style="left:277.30px;top:101.00px" width="7.00" height="6.40" viewBox="0 0 7 6.4"><path d="M0.2 3.2 H6.1 M3.4 0.5 L6.1 3.2 L3.4 5.9" stroke="#c4c4c4" stroke-width="0.9" fill="none"/></svg>
<svg class="b" style="left:291.60px;top:102.60px" width="3.80" height="2.60" viewBox="0 0 3.8 2.6"><path d="M0.4 0.4 L1.9 2.1 L3.4 0.4" stroke="#555" stroke-width="0.8" fill="none"/></svg>
<svg class="b" style="left:300.80px;top:100.60px" width="6.60" height="7.40" viewBox="0 0 6.6 7.4"><path d="M3.3 7.3 V1 M0.6 3.7 L3.3 1 L6 3.7" stroke="#555" stroke-width="0.95" fill="none"/></svg>
<div class="b" style="left:311.20px;top:98.20px;width:266.80px;height:12.20px;border:0.55px solid #d9d9d9;box-sizing:border-box;background:#fff;"></div>
<svg class="b" style="left:313.60px;top:99.40px" width="7.20" height="9.00" viewBox="0 0 16 20"><rect x="0.6" y="0.6" width="12.6" height="18.8" fill="#f7d25e" stroke="#ecc143" stroke-width="1.2"/><path d="M13.2 9.5 L15.4 11.5 V19.4 H13.2 Z" fill="#efbf3e"/><rect x="2.2" y="2.2" width="9.6" height="15.6" fill="#fde497"/></svg>
<div class="t" style="left:323.00px;transform:scaleX(0.8929);transform-origin:0 0;top:101.99px;font-size:6.27px;line-height:6.27px;color:#555;-webkit-text-stroke:0.08px #555;">«</div>
<div class="t" style="left:331.50px;transform:scaleX(0.8929);transform-origin:0 0;top:101.82px;font-size:6.56px;line-height:6.56px;color:#222;-webkit-text-stroke:0.14px #222;">DCS World</div>
<div class="t" style="left:373.50px;transform:scaleX(0.8929);transform-origin:0 0;top:101.80px;font-size:6.61px;line-height:6.61px;color:#222;-webkit-text-stroke:0.14px #222;">Mods</div>
<div class="t" style="left:400.40px;transform:scaleX(0.8929);transform-origin:0 0;top:101.80px;font-size:6.61px;line-height:6.61px;color:#222;-webkit-text-stroke:0.14px #222;">terrains</div>
<div class="t" style="left:433.60px;transform:scaleX(0.8929);transform-origin:0 0;top:101.80px;font-size:6.61px;line-height:6.61px;color:#222;-webkit-text-stroke:0.14px #222;">Caucasus</div>
<div class="t" style="left:471.00px;transform:scaleX(0.8929);transform-origin:0 0;top:101.74px;font-size:6.72px;line-height:6.72px;color:#222;-webkit-text-stroke:0.14px #222;">vfstextures</div>
<svg class="b" style="left:365.30px;top:102.00px" width="3.00" height="4.60" viewBox="0 0 3.0 4.6"><path d="M0.4 0.4 L2.5 2.3 L0.4 4.2" stroke="#3a3a3a" stroke-width="0.75" fill="none"/></svg>
<svg class="b" style="left:394.30px;top:102.00px" width="3.00" height="4.60" viewBox="0 0 3.0 4.6"><path d="M0.4 0.4 L2.5 2.3 L0.4 4.2" stroke="#3a3a3a" stroke-width="0.75" fill="none"/></svg>
<svg class="b" style="left:426.30px;top:102.00px" width="3.00" height="4.60" viewBox="0 0 3.0 4.6"><path d="M0.4 0.4 L2.5 2.3 L0.4 4.2" stroke="#3a3a3a" stroke-width="0.75" fill="none"/></svg>
<svg class="b" style="left:464.60px;top:102.00px" width="3.00" height="4.60" viewBox="0 0 3.0 4.6"><path d="M0.4 0.4 L2.5 2.3 L0.4 4.2" stroke="#3a3a3a" stroke-width="0.75" fill="none"/></svg>
<svg class="b" style="left:505.60px;top:102.00px" width="3.00" height="4.60" viewBox="0 0 3.0 4.6"><path d="M0.4 0.4 L2.5 2.3 L0.4 4.2" stroke="#3a3a3a" stroke-width="0.75" fill="none"/></svg>
<svg class="b" style="left:563.20px;top:103.00px" width="4.20" height="2.60" viewBox="0 0 4.2 2.6"><path d="M0.3 0.3 L2.1 2.2 L3.9 0.3" stroke="#444" stroke-width="0.6" fill="none"/></svg>
<div class="b" style="left:569.00px;top:98.60px;width:0.50px;height:11.40px;background:#e5e5e5;"></div>
<svg class="b" style="left:570.80px;top:101.00px" width="6.50" height="6.50" viewBox="0 0 6.5 6.5"><path d="M5.3 2.6 A2.5 2.5 0 1 1 3.2 1.3" stroke="#555" stroke-width="0.65" fill="none"/><path d="M2.6 0.2 L4 1.3 L2.7 2.6" stroke="#555" stroke-width="0.6" fill="none"/></svg>
<div class="b" style="left:584.30px;top:98.50px;width:102.30px;height:11.00px;border:0.55px solid #d9d9d9;box-sizing:border-box;background:#fff;"></div>
<div class="t" style="left:588.90px;transform:scaleX(0.8929);transform-origin:0 0;top:102.01px;font-size:6.94px;line-height:6.94px;color:#6d6d6d;-webkit-text-stroke:0.08px #6d6d6d;">Поиск: vfstextures</div>
<svg class="b" style="left:676.30px;top:101.20px" width="6.00" height="6.00" viewBox="0 0 6 6"><circle cx="3.7" cy="2.3" r="1.8" stroke="#444" stroke-width="0.6" fill="none"/><path d="M2.4 3.6 L0.5 5.5" stroke="#444" stroke-width="0.7"/></svg>
<div class="b" style="left:354.00px;top:113.20px;width:0.50px;height:407.80px;background:#ececec;"></div>
<div class="b" style="left:256.90px;top:121.80px;width:95.90px;height:11.90px;background:#e5f3ff;"></div>
<div class="b" style="left:256.50px;top:288.40px;width:96.10px;height:12.20px;background:#d9d9d9;"></div>
<svg class="b" style="left:260.00px;top:126.00px" width="5.00" height="3.40" viewBox="0 0 5.0 3.4"><path d="M0.5 0.6 L2.5 2.7 L4.5 0.6" stroke="#444" stroke-width="0.85" fill="none"/></svg>
<svg class="b" style="left:269.40px;top:123.60px" width="7.60" height="7.60" viewBox="0 0 16 16"><path d="M8 0.5 L10.2 5.6 L15.5 6 L11.5 9.5 L12.8 15 L8 12 L3.2 15 L4.5 9.5 L0.5 6 L5.8 5.6 Z" fill="#2a86e0"/></svg>
<div class="t" style="left:278.70px;transform:scaleX(0.8929);transform-origin:0 0;top:124.15px;font-size:7.06px;line-height:7.06px;color:#1e1e1e;-webkit-text-stroke:0.14px #1e1e1e;">Быстрый доступ</div>
<svg class="b" style="left:271.60px;top:135.90px" width="9.40" height="9.20" viewBox="0 0 16 16"><rect x="0.5" y="2" width="15" height="10.5" fill="#1e8fe8"/><rect x="1.5" y="3" width="13" height="8.5" fill="#44b0f5"/><rect x="4" y="13" width="8" height="1.5" fill="#5aa7e0"/></svg>
<div class="t" style="left:283.40px;transform:scaleX(0.8929);transform-origin:0 0;top:136.75px;font-size:7.06px;line-height:7.06px;color:#1e1e1e;-webkit-text-stroke:0.14px #1e1e1e;">Рабочий стол</div>
<svg class="b" style="left:345.80px;top:137.70px" width="5.40" height="5.40" viewBox="0 0 10 10"><path d="M6 0.5 L9.5 4 L8 4.6 L6.6 6 L6.3 8.2 L1.8 3.7 L4 3.4 L5.4 2 Z M3.3 6.7 L0.5 9.5" stroke="#555" stroke-width="0.8" fill="#888"/></svg>
<svg class="b" style="left:271.60px;top:148.40px" width="9.40" height="9.20" viewBox="0 0 16 16"><path d="M6 0 H10 V8 H14 L8 15 L2 8 H6 Z" fill="#1f7ad6"/></svg>
<div class="t" style="left:283.40px;transform:scaleX(0.8929);transform-origin:0 0;top:149.25px;font-size:7.06px;line-height:7.06px;color:#1e1e1e;-webkit-text-stroke:0.14px #1e1e1e;">Загрузки</div>
<svg class="b" style="left:345.80px;top:150.20px" width="5.40" height="5.40" viewBox="0 0 10 10"><path d="M6 0.5 L9.5 4 L8 4.6 L6.6 6 L6.3 8.2 L1.8 3.7 L4 3.4 L5.4 2 Z M3.3 6.7 L0.5 9.5" stroke="#555" stroke-width="0.8" fill="#888"/></svg>
<svg class="b" style="left:271.60px;top:160.90px" width="9.40" height="9.20" viewBox="0 0 16 16"><path d="M2.5 0.5 H10 L13.5 4 V15.5 H2.5 Z" fill="#f4f4f4" stroke="#9a9a9a" stroke-width="0.8"/><path d="M5 6 H9 M5 8.5 H11 M5 11 H10" stroke="#5aa0e0" stroke-width="1"/></svg>
<div class="t" style="left:283.40px;transform:scaleX(0.8929);transform-origin:0 0;top:161.75px;font-size:7.06px;line-height:7.06px;color:#1e1e1e;-webkit-text-stroke:0.14px #1e1e1e;">Документы</div>
<svg class="b" style="left:345.80px;top:162.70px" width="5.40" height="5.40" viewBox="0 0 10 10"><path d="M6 0.5 L9.5 4 L8 4.6 L6.6 6 L6.3 8.2 L1.8 3.7 L4 3.4 L5.4 2 Z M3.3 6.7 L0.5 9.5" stroke="#555" stroke-width="0.8" fill="#888"/></svg>
<svg class="b" style="left:271.60px;top:173.40px" width="9.40" height="9.20" viewBox="0 0 16 16"><rect x="0.5" y="2.5" width="15" height="11" fill="#e4e4e4" stroke="#a0a0a0" stroke-width="0.8"/><rect x="2" y="4" width="12" height="8" fill="#bcd8ee"/><path d="M2 12 L6 9 L10 10.5 L14 8.5 V12 Z" fill="#2f5a3a"/></svg>
<div class="t" style="left:283.40px;transform:scaleX(0.8929);transform-origin:0 0;top:174.25px;font-size:7.06px;line-height:7.06px;color:#1e1e1e;-webkit-text-stroke:0.14px #1e1e1e;">Изображения</div>
<svg class="b" style="left:345.80px;top:175.20px" width="5.40" height="5.40" viewBox="0 0 10 10"><path d="M6 0.5 L9.5 4 L8 4.6 L6.6 6 L6.3 8.2 L1.8 3.7 L4 3.4 L5.4 2 Z M3.3 6.7 L0.5 9.5" stroke="#555" stroke-width="0.8" fill="#888"/></svg>
<svg class="b" style="left:259.40px;top:192.80px" width="5.00" height="3.40" viewBox="0 0 5.0 3.4"><path d="M0.5 0.6 L2.5 2.7 L4.5 0.6" stroke="#444" stroke-width="0.85" fill="none"/></svg>
<svg class="b" style="left:267.80px;top:190.40px" width="8.80" height="8.00" viewBox="0 0 16 16"><rect x="1" y="1" width="14" height="10" fill="#2aa8f2" stroke="#888" stroke-width="0.6"/><rect x="2" y="2" width="12" height="8" fill="#5cc8fb"/><rect x="4" y="12.5" width="8" height="2" fill="#cfcfcf"/></svg>
<div class="t" style="left:279.00px;transform:scaleX(0.8929);transform-origin:0 0;top:190.85px;font-size:7.06px;line-height:7.06px;color:#1e1e1e;-webkit-text-stroke:0.14px #1e1e1e;">Этот компьютер</div>
<svg class="b" style="left:264.40px;top:204.50px" width="3.40" height="5.00" viewBox="0 0 3.4 5.0"><path d="M0.6 0.5 L2.7 2.5 L0.6 4.5" stroke="#707070" stroke-width="0.8" fill="none"/></svg>
<svg class="b" style="left:271.60px;top:202.40px" width="9.40" height="9.20" viewBox="0 0 16 16"><rect x="2" y="0.5" width="12" height="15" fill="#333"/><path d="M2.8 2 V14 M13.2 2 V14" stroke="#aaa" stroke-width="0.8" stroke-dasharray="1 1"/><rect x="4.5" y="2" width="7" height="4" fill="#2f6fd0"/><rect x="4.5" y="6" width="7" height="4" fill="#3aa040"/><rect x="4.5" y="10" width="7" height="4" fill="#d04a20"/></svg>
<div class="t" style="left:283.30px;transform:scaleX(0.8929);transform-origin:0 0;top:203.25px;font-size:7.06px;line-height:7.06px;color:#1e1e1e;-webkit-text-stroke:0.14px #1e1e1e;">Видео</div>
<svg class="b" style="left:264.40px;top:217.10px" width="3.40" height="5.00" viewBox="0 0 3.4 5.0"><path d="M0.6 0.5 L2.7 2.5 L0.6 4.5" stroke="#707070" stroke-width="0.8" fill="none"/></svg>
<svg class="b" style="left:271.60px;top:215.00px" width="9.40" height="9.20" viewBox="0 0 16 16"><path d="M2.5 0.5 H10 L13.5 4 V15.5 H2.5 Z" fill="#f4f4f4" stroke="#9a9a9a" stroke-width="0.8"/><path d="M5 6 H9 M5 8.5 H11 M5 11 H10" stroke="#5aa0e0" stroke-width="1"/></svg>
<div class="t" style="left:283.30px;transform:scaleX(0.8929);transform-origin:0 0;top:215.85px;font-size:7.06px;line-height:7.06px;color:#1e1e1e;-webkit-text-stroke:0.14px #1e1e1e;">Документы</div>
<svg class="b" style="left:264.40px;top:229.60px" width="3.40" height="5.00" viewBox="0 0 3.4 5.0"><path d="M0.6 0.5 L2.7 2.5 L0.6 4.5" stroke="#707070" stroke-width="0.8" fill="none"/></svg>
<svg class="b" style="left:271.60px;top:227.50px" width="9.40" height="9.20" viewBox="0 0 16 16"><path d="M6 0 H10 V8 H14 L8 15 L2 8 H6 Z" fill="#1f7ad6"/></svg>
<div class="t" style="left:283.30px;transform:scaleX(0.8929);transform-origin:0 0;top:228.35px;font-size:7.06px;line-height:7.06px;color:#1e1e1e;-webkit-text-stroke:0.14px #1e1e1e;">Загрузки</div>
<svg class="b" style="left:264.40px;top:242.10px" width="3.40" height="5.00" viewBox="0 0 3.4 5.0"><path d="M0.6 0.5 L2.7 2.5 L0.6 4.5" stroke="#707070" stroke-width="0.8" fill="none"/></svg>
<svg class="b" style="left:271.60px;top:240.00px" width="9.40" height="9.20" viewBox="0 0 16 16"><rect x="0.5" y="2.5" width="15" height="11" fill="#e4e4e4" stroke="#a0a0a0" stroke-width="0.8"/><rect x="2" y="4" width="12" height="8" fill="#bcd8ee"/><path d="M2 12 L6 9 L10 10.5 L14 8.5 V12 Z" fill="#2f5a3a"/></svg>
<div class="t" style="left:283.30px;transform:scaleX(0.8929);transform-origin:0 0;top:240.85px;font-size:7.06px;line-height:7.06px;color:#1e1e1e;-webkit-text-stroke:0.14px #1e1e1e;">Изображения</div>
<svg class="b" style="left:264.40px;top:254.60px" width="3.40" height="5.00" viewBox="0 0 3.4 5.0"><path d="M0.6 0.5 L2.7 2.5 L0.6 4.5" stroke="#707070" stroke-width="0.8" fill="none"/></svg>
<svg class="b" style="left:271.60px;top:252.50px" width="9.40" height="9.20" viewBox="0 0 16 16"><path d="M6 1 V11.5 A2.5 2.2 0 1 1 4 9.4 V1 Z M6 1 Q11 3 10 8 Q9 5 6 4.5" fill="#1f7ad6"/></svg>
<div class="t" style="left:283.30px;transform:scaleX(0.8929);transform-origin:0 0;top:253.35px;font-size:7.06px;line-height:7.06px;color:#1e1e1e;-webkit-text-stroke:0.14px #1e1e1e;">Музыка</div>
<svg class="b" style="left:264.40px;top:267.00px" width="3.40" height="5.00" viewBox="0 0 3.4 5.0"><path d="M0.6 0.5 L2.7 2.5 L0.6 4.5" stroke="#707070" stroke-width="0.8" fill="none"/></svg>
<svg class="b" style="left:271.60px;top:264.90px" width="9.40" height="9.20" viewBox="0 0 16 16"><rect x="0.5" y="2" width="15" height="10.5" fill="#1e8fe8"/><rect x="1.5" y="3" width="13" height="8.5" fill="#44b0f5"/><rect x="4" y="13" width="8" height="1.5" fill="#5aa7e0"/></svg>
<div class="t" style="left:283.30px;transform:scaleX(0.8929);transform-origin:0 0;top:265.75px;font-size:7.06px;line-height:7.06px;color:#1e1e1e;-webkit-text-stroke:0.14px #1e1e1e;">Рабочий стол</div>
<svg class="b" style="left:264.40px;top:279.70px" width="3.40" height="5.00" viewBox="0 0 3.4 5.0"><path d="M0.6 0.5 L2.7 2.5 L0.6 4.5" stroke="#707070" stroke-width="0.8" fill="none"/></svg>
<svg class="b" style="left:271.60px;top:277.60px" width="9.40" height="9.20" viewBox="0 0 16 16"><rect x="1" y="9" width="14" height="5" fill="#555"/><rect x="1" y="8" width="14" height="2" fill="#ddd"/><path d="M2 1 H5 V4 H2 Z M6 1 H9 V4 H6 Z M2 5 H5 V8 H2 Z M6 5 H9 V8 H6 Z" fill="#1f8fe0"/></svg>
<div class="t" style="left:283.30px;transform:scaleX(0.8929);transform-origin:0 0;top:278.45px;font-size:7.06px;line-height:7.06px;color:#1e1e1e;-webkit-text-stroke:0.14px #1e1e1e;">Локальный диск (C:)</div>
<svg class="b" style="left:264.40px;top:292.20px" width="3.40" height="5.00" viewBox="0 0 3.4 5.0"><path d="M0.6 0.5 L2.7 2.5 L0.6 4.5" stroke="#707070" stroke-width="0.8" fill="none"/></svg>
<svg class="b" style="left:271.60px;top:290.10px" width="9.40" height="9.20" viewBox="0 0 16 16"><rect x="1" y="9.5" width="14" height="4.5" fill="#444"/><rect x="1" y="8" width="14" height="2" fill="#e6e6e6"/></svg>
<div class="t" style="left:283.30px;transform:scaleX(0.8929);transform-origin:0 0;top:290.95px;font-size:7.06px;line-height:7.06px;color:#1e1e1e;-webkit-text-stroke:0.14px #1e1e1e;">Локальный диск (D:)</div>
<svg class="b" style="left:264.40px;top:304.70px" width="3.40" height="5.00" viewBox="0 0 3.4 5.0"><path d="M0.6 0.5 L2.7 2.5 L0.6 4.5" stroke="#707070" stroke-width="0.8" fill="none"/></svg>
<svg class="b" style="left:271.60px;top:302.60px" width="9.40" height="9.20" viewBox="0 0 16 16"><rect x="1" y="9.5" width="14" height="4.5" fill="#444"/><rect x="1" y="8" width="14" height="2" fill="#e6e6e6"/></svg>
<div class="t" style="left:283.30px;transform:scaleX(0.8929);transform-origin:0 0;top:303.45px;font-size:7.06px;line-height:7.06px;color:#1e1e1e;-webkit-text-stroke:0.14px #1e1e1e;">Локальный диск (H:)</div>
<svg class="b" style="left:264.40px;top:317.10px" width="3.40" height="5.00" viewBox="0 0 3.4 5.0"><path d="M0.6 0.5 L2.7 2.5 L0.6 4.5" stroke="#707070" stroke-width="0.8" fill="none"/></svg>
<svg class="b" style="left:271.60px;top:315.00px" width="9.40" height="9.20" viewBox="0 0 16 16"><rect x="1" y="9.5" width="14" height="4.5" fill="#444"/><rect x="1" y="8" width="14" height="2" fill="#e6e6e6"/></svg>
<div class="t" style="left:283.30px;transform:scaleX(0.8929);transform-origin:0 0;top:315.85px;font-size:7.06px;line-height:7.06px;color:#1e1e1e;-webkit-text-stroke:0.14px #1e1e1e;">Локальный диск (J:)</div>
<svg class="b" style="left:261.60px;top:333.90px" width="3.40" height="5.00" viewBox="0 0 3.4 5.0"><path d="M0.6 0.5 L2.7 2.5 L0.6 4.5" stroke="#707070" stroke-width="0.8" fill="none"/></svg>
<svg class="b" style="left:267.80px;top:332.40px" width="8.00" height="8.00" viewBox="0 0 16 16"><path d="M1 8 L8 4 L15 8 L8 12 Z" fill="#3aa0ea"/><rect x="3" y="7" width="10" height="7" fill="#1f7ad6"/><rect x="6" y="1" width="8" height="6" fill="#5ab7f5"/></svg>
<div class="t" style="left:279.20px;transform:scaleX(0.8929);transform-origin:0 0;top:332.65px;font-size:7.06px;line-height:7.06px;color:#1e1e1e;-webkit-text-stroke:0.14px #1e1e1e;">Сеть</div>
<div class="t" style="left:363.80px;transform:scaleX(0.8929);transform-origin:0 0;top:116.58px;font-size:7.00px;line-height:7.00px;color:#4c607a;-webkit-text-stroke:0.08px #4c607a;">Имени</div>
<svg class="b" style="left:425.60px;top:113.00px" width="5.00" height="3.00" viewBox="0 0 5.0 3.0"><path d="M0.4 2.6 L2.5 0.5 L4.6 2.6" stroke="#777" stroke-width="0.7" fill="none"/></svg>
<div class="t" style="left:499.00px;transform:scaleX(0.8929);transform-origin:0 0;top:116.66px;font-size:6.85px;line-height:6.85px;color:#4c607a;-webkit-text-stroke:0.08px #4c607a;">Дата изменения</div>
<div class="t" style="left:562.00px;transform:scaleX(0.8929);transform-origin:0 0;top:116.67px;font-size:6.83px;line-height:6.83px;color:#4c607a;-webkit-text-stroke:0.08px #4c607a;">Тип</div>
<div class="t" style="left:624.60px;transform:scaleX(0.8929);transform-origin:0 0;top:116.82px;font-size:6.56px;line-height:6.56px;color:#4c607a;-webkit-text-stroke:0.08px #4c607a;">Размера</div>
<div class="b" style="left:496.00px;top:114.50px;width:0.50px;height:11.00px;background:#e5e5e5;"></div>
<div class="b" style="left:559.00px;top:114.50px;width:0.50px;height:11.00px;background:#e5e5e5;"></div>
<div class="b" style="left:621.40px;top:114.50px;width:0.50px;height:11.00px;background:#e5e5e5;"></div>
<div class="b" style="left:662.60px;top:114.50px;width:0.50px;height:11.00px;background:#e5e5e5;"></div>
<svg class="b" style="left:365.00px;top:130.10px" width="7.00" height="8.80" viewBox="0 0 16 20"><rect x="0.6" y="0.6" width="12.6" height="18.8" fill="#f7d25e" stroke="#ecc143" stroke-width="1.2"/><path d="M13.2 9.5 L15.4 11.5 V19.4 H13.2 Z" fill="#efbf3e"/><rect x="2.2" y="2.2" width="9.6" height="15.6" fill="#fde497"/></svg>
<div class="t" style="left:374.60px;transform:scaleX(0.8929);transform-origin:0 0;top:132.77px;font-size:6.83px;line-height:6.83px;color:#1e1e1e;-webkit-text-stroke:0.14px #1e1e1e;">ForestSubctrateAutumn</div>
<div class="t" style="left:499.60px;transform:scaleX(0.8197);transform-origin:0 0;top:132.78px;font-size:6.82px;line-height:6.82px;color:#6d6d6d;-webkit-text-stroke:0.08px #6d6d6d;">01.05.2018 17:53</div>
<div class="t" style="left:561.90px;transform:scaleX(0.8929);transform-origin:0 0;top:132.75px;font-size:6.88px;line-height:6.88px;color:#6d6d6d;-webkit-text-stroke:0.08px #6d6d6d;">Папка с файлами</div>
<svg class="b" style="left:365.00px;top:141.01px" width="7.00" height="8.80" viewBox="0 0 16 20"><rect x="0.6" y="0.6" width="12.6" height="18.8" fill="#f7d25e" stroke="#ecc143" stroke-width="1.2"/><path d="M13.2 9.5 L15.4 11.5 V19.4 H13.2 Z" fill="#efbf3e"/><rect x="2.2" y="2.2" width="9.6" height="15.6" fill="#fde497"/></svg>
<div class="t" style="left:374.60px;transform:scaleX(0.8929);transform-origin:0 0;top:143.69px;font-size:6.83px;line-height:6.83px;color:#1e1e1e;-webkit-text-stroke:0.14px #1e1e1e;">ForestSubctrateSpring</div>
<div class="t" style="left:499.60px;transform:scaleX(0.8197);transform-origin:0 0;top:143.69px;font-size:6.82px;line-height:6.82px;color:#6d6d6d;-webkit-text-stroke:0.08px #6d6d6d;">01.05.2018 17:53</div>
<div class="t" style="left:561.90px;transform:scaleX(0.8929);transform-origin:0 0;top:143.66px;font-size:6.88px;line-height:6.88px;color:#6d6d6d;-webkit-text-stroke:0.08px #6d6d6d;">Папка с файлами</div>
<svg class="b" style="left:365.00px;top:151.92px" width="7.00" height="8.80" viewBox="0 0 16 20"><rect x="0.6" y="0.6" width="12.6" height="18.8" fill="#f7d25e" stroke="#ecc143" stroke-width="1.2"/><path d="M13.2 9.5 L15.4 11.5 V19.4 H13.2 Z" fill="#efbf3e"/><rect x="2.2" y="2.2" width="9.6" height="15.6" fill="#fde497"/></svg>
<div class="t" style="left:374.60px;transform:scaleX(0.8929);transform-origin:0 0;top:154.60px;font-size:6.83px;line-height:6.83px;color:#1e1e1e;-webkit-text-stroke:0.14px #1e1e1e;">ForestSubctrateSummer</div>
<div class="t" style="left:499.60px;transform:scaleX(0.8197);transform-origin:0 0;top:154.60px;font-size:6.82px;line-height:6.82px;color:#6d6d6d;-webkit-text-stroke:0.08px #6d6d6d;">01.05.2018 17:53</div>
<div class="t" style="left:561.90px;transform:scaleX(0.8929);transform-origin:0 0;top:154.57px;font-size:6.88px;line-height:6.88px;color:#6d6d6d;-webkit-text-stroke:0.08px #6d6d6d;">Папка с файлами</div>
<svg class="b" style="left:365.00px;top:162.84px" width="7.00" height="8.80" viewBox="0 0 16 20"><rect x="0.6" y="0.6" width="12.6" height="18.8" fill="#f7d25e" stroke="#ecc143" stroke-width="1.2"/><path d="M13.2 9.5 L15.4 11.5 V19.4 H13.2 Z" fill="#efbf3e"/><rect x="2.2" y="2.2" width="9.6" height="15.6" fill="#fde497"/></svg>
<div class="t" style="left:374.60px;transform:scaleX(0.8929);transform-origin:0 0;top:165.51px;font-size:6.83px;line-height:6.83px;color:#1e1e1e;-webkit-text-stroke:0.14px #1e1e1e;">ForestSubctrateWinter</div>
<div class="t" style="left:499.60px;transform:scaleX(0.8197);transform-origin:0 0;top:165.52px;font-size:6.82px;line-height:6.82px;color:#6d6d6d;-webkit-text-stroke:0.08px #6d6d6d;">01.05.2018 17:53</div>
<div class="t" style="left:561.90px;transform:scaleX(0.8929);transform-origin:0 0;top:165.48px;font-size:6.88px;line-height:6.88px;color:#6d6d6d;-webkit-text-stroke:0.08px #6d6d6d;">Папка с файлами</div>
<svg class="b" style="left:365.00px;top:173.75px" width="7.00" height="8.80" viewBox="0 0 16 20"><rect x="0.6" y="0.6" width="12.6" height="18.8" fill="#f7d25e" stroke="#ecc143" stroke-width="1.2"/><path d="M13.2 9.5 L15.4 11.5 V19.4 H13.2 Z" fill="#efbf3e"/><rect x="2.2" y="2.2" width="9.6" height="15.6" fill="#fde497"/></svg>
<div class="t" style="left:374.60px;transform:scaleX(0.8929);transform-origin:0 0;top:176.42px;font-size:6.83px;line-height:6.83px;color:#1e1e1e;-webkit-text-stroke:0.14px #1e1e1e;">LandNoiseSummer</div>
<div class="t" style="left:499.60px;transform:scaleX(0.8197);transform-origin:0 0;top:176.43px;font-size:6.82px;line-height:6.82px;color:#6d6d6d;-webkit-text-stroke:0.08px #6d6d6d;">01.05.2018 17:53</div>
<div class="t" style="left:561.90px;transform:scaleX(0.8929);transform-origin:0 0;top:176.40px;font-size:6.88px;line-height:6.88px;color:#6d6d6d;-webkit-text-stroke:0.08px #6d6d6d;">Папка с файлами</div>
<svg class="b" style="left:365.00px;top:184.66px" width="7.00" height="8.80" viewBox="0 0 16 20"><rect x="0.6" y="0.6" width="12.6" height="18.8" fill="#f7d25e" stroke="#ecc143" stroke-width="1.2"/><path d="M13.2 9.5 L15.4 11.5 V19.4 H13.2 Z" fill="#efbf3e"/><rect x="2.2" y="2.2" width="9.6" height="15.6" fill="#fde497"/></svg>
<div class="t" style="left:374.60px;transform:scaleX(0.8929);transform-origin:0 0;top:187.33px;font-size:6.83px;line-height:6.83px;color:#1e1e1e;-webkit-text-stroke:0.14px #1e1e1e;">NoiseAutumn</div>
<div class="t" style="left:499.60px;transform:scaleX(0.8197);transform-origin:0 0;top:187.34px;font-size:6.82px;line-height:6.82px;color:#6d6d6d;-webkit-text-stroke:0.08px #6d6d6d;">01.05.2018 17:53</div>
<div class="t" style="left:561.90px;transform:scaleX(0.8929);transform-origin:0 0;top:187.31px;font-size:6.88px;line-height:6.88px;color:#6d6d6d;-webkit-text-stroke:0.08px #6d6d6d;">Папка с файлами</div>
<svg class="b" style="left:365.00px;top:195.57px" width="7.00" height="8.80" viewBox="0 0 16 20"><rect x="0.6" y="0.6" width="12.6" height="18.8" fill="#f7d25e" stroke="#ecc143" stroke-width="1.2"/><path d="M13.2 9.5 L15.4 11.5 V19.4 H13.2 Z" fill="#efbf3e"/><rect x="2.2" y="2.2" width="9.6" height="15.6" fill="#fde497"/></svg>
<div class="t" style="left:374.60px;transform:scaleX(0.8929);transform-origin:0 0;top:198.25px;font-size:6.83px;line-height:6.83px;color:#1e1e1e;-webkit-text-stroke:0.14px #1e1e1e;">NoiseSpring</div>
<div class="t" style="left:499.60px;transform:scaleX(0.8197);transform-origin:0 0;top:198.25px;font-size:6.82px;line-height:6.82px;color:#6d6d6d;-webkit-text-stroke:0.08px #6d6d6d;">01.05.2018 17:53</div>
<div class="t" style="left:561.90px;transform:scaleX(0.8929);transform-origin:0 0;top:198.22px;font-size:6.88px;line-height:6.88px;color:#6d6d6d;-webkit-text-stroke:0.08px #6d6d6d;">Папка с файлами</div>
<svg class="b" style="left:365.00px;top:206.48px" width="7.00" height="8.80" viewBox="0 0 16 20"><rect x="0.6" y="0.6" width="12.6" height="18.8" fill="#f7d25e" stroke="#ecc143" stroke-width="1.2"/><path d="M13.2 9.5 L15.4 11.5 V19.4 H13.2 Z" fill="#efbf3e"/><rect x="2.2" y="2.2" width="9.6" height="15.6" fill="#fde497"/></svg>
<div class="t" style="left:374.60px;transform:scaleX(0.8929);transform-origin:0 0;top:209.16px;font-size:6.83px;line-height:6.83px;color:#1e1e1e;-webkit-text-stroke:0.14px #1e1e1e;">NoiseSummer</div>
<div class="t" style="left:499.60px;transform:scaleX(0.8197);transform-origin:0 0;top:209.16px;font-size:6.82px;line-height:6.82px;color:#6d6d6d;-webkit-text-stroke:0.08px #6d6d6d;">01.05.2018 17:53</div>
<div class="t" style="left:561.90px;transform:scaleX(0.8929);transform-origin:0 0;top:209.13px;font-size:6.88px;line-height:6.88px;color:#6d6d6d;-webkit-text-stroke:0.08px #6d6d6d;">Папка с файлами</div>
<svg class="b" style="left:364.00px;top:218.00px" width="8.60" height="8.60" viewBox="0 0 16 16"><path d="M2.5 3 L5.5 0.5 H15.5 V5.5 H2.5 Z" fill="#c43cbf"/><rect x="2.5" y="5.5" width="13" height="5" fill="#3a2fc0"/><rect x="2.5" y="10.5" width="13" height="5" fill="#1fa83a"/><path d="M0.5 3 H2.5 V15.5 H0.5 Z" fill="#e4def2"/><path d="M1.5 5 V6 M1.5 8 V9 M1.5 11 V12 M1.5 13.5 V14.5" stroke="#7a6ac8" stroke-width="0.8"/><path d="M5 0.5 H8.5 L10.5 5.5 V15.5 H7.5 V6 Z" fill="#4e2a12"/><rect x="7" y="6.5" width="4" height="3" fill="#6a6a6a"/></svg>
<div class="t" style="left:374.60px;transform:scaleX(0.8929);transform-origin:0 0;top:220.07px;font-size:6.83px;line-height:6.83px;color:#1e1e1e;-webkit-text-stroke:0.14px #1e1e1e;">AirfieldsTextures.min.zip</div>
<div class="t" style="left:499.60px;transform:scaleX(0.8197);transform-origin:0 0;top:220.08px;font-size:6.82px;line-height:6.82px;color:#6d6d6d;-webkit-text-stroke:0.08px #6d6d6d;">23.02.2018 20:06</div>
<div class="t" style="left:561.90px;transform:scaleX(0.8929);transform-origin:0 0;top:220.12px;font-size:6.74px;line-height:6.74px;color:#6d6d6d;-webkit-text-stroke:0.08px #6d6d6d;">Архив ZIP - WinR...</div>
<div class="t" style="left:599.70px;width:59.00px;text-align:right;transform:scaleX(0.8475);transform-origin:100% 0;top:220.06px;font-size:6.84px;line-height:6.84px;color:#6d6d6d;-webkit-text-stroke:0.08px #6d6d6d;">10 434 КБ</div>
<svg class="b" style="left:364.00px;top:228.91px" width="8.60" height="8.60" viewBox="0 0 16 16"><path d="M2.5 3 L5.5 0.5 H15.5 V5.5 H2.5 Z" fill="#c43cbf"/><rect x="2.5" y="5.5" width="13" height="5" fill="#3a2fc0"/><rect x="2.5" y="10.5" width="13" height="5" fill="#1fa83a"/><path d="M0.5 3 H2.5 V15.5 H0.5 Z" fill="#e4def2"/><path d="M1.5 5 V6 M1.5 8 V9 M1.5 11 V12 M1.5 13.5 V14.5" stroke="#7a6ac8" stroke-width="0.8"/><path d="M5 0.5 H8.5 L10.5 5.5 V15.5 H7.5 V6 Z" fill="#4e2a12"/><rect x="7" y="6.5" width="4" height="3" fill="#6a6a6a"/></svg>
<div class="t" style="left:374.60px;transform:scaleX(0.8929);transform-origin:0 0;top:230.98px;font-size:6.83px;line-height:6.83px;color:#1e1e1e;-webkit-text-stroke:0.14px #1e1e1e;">AirfieldsTextures.zip</div>
<div class="t" style="left:499.60px;transform:scaleX(0.8197);transform-origin:0 0;top:230.99px;font-size:6.82px;line-height:6.82px;color:#6d6d6d;-webkit-text-stroke:0.08px #6d6d6d;">23.02.2018 20:06</div>
<div class="t" style="left:561.90px;transform:scaleX(0.8929);transform-origin:0 0;top:231.03px;font-size:6.74px;line-height:6.74px;color:#6d6d6d;-webkit-text-stroke:0.08px #6d6d6d;">Архив ZIP - WinR...</div>
<div class="t" style="left:599.70px;width:59.00px;text-align:right;transform:scaleX(0.8475);transform-origin:100% 0;top:230.98px;font-size:6.84px;line-height:6.84px;color:#6d6d6d;-webkit-text-stroke:0.08px #6d6d6d;">21 386 КБ</div>
<svg class="b" style="left:364.00px;top:239.82px" width="8.60" height="8.60" viewBox="0 0 16 16"><path d="M2.5 3 L5.5 0.5 H15.5 V5.5 H2.5 Z" fill="#c43cbf"/><rect x="2.5" y="5.5" width="13" height="5" fill="#3a2fc0"/><rect x="2.5" y="10.5" width="13" height="5" fill="#1fa83a"/><path d="M0.5 3 H2.5 V15.5 H0.5 Z" fill="#e4def2"/><path d="M1.5 5 V6 M1.5 8 V9 M1.5 11 V12 M1.5 13.5 V14.5" stroke="#7a6ac8" stroke-width="0.8"/><path d="M5 0.5 H8.5 L10.5 5.5 V15.5 H7.5 V6 Z" fill="#4e2a12"/><rect x="7" y="6.5" width="4" height="3" fill="#6a6a6a"/></svg>
<div class="t" style="left:374.60px;transform:scaleX(0.8929);transform-origin:0 0;top:241.89px;font-size:6.83px;line-height:6.83px;color:#1e1e1e;-webkit-text-stroke:0.14px #1e1e1e;">AirfieldsTexturesWinter.min.zip</div>
<div class="t" style="left:499.60px;transform:scaleX(0.8197);transform-origin:0 0;top:241.90px;font-size:6.82px;line-height:6.82px;color:#6d6d6d;-webkit-text-stroke:0.08px #6d6d6d;">23.02.2018 20:06</div>
<div class="t" style="left:561.90px;transform:scaleX(0.8929);transform-origin:0 0;top:241.94px;font-size:6.74px;line-height:6.74px;color:#6d6d6d;-webkit-text-stroke:0.08px #6d6d6d;">Архив ZIP - WinR...</div>
<div class="t" style="left:599.70px;width:59.00px;text-align:right;transform:scaleX(0.8475);transform-origin:100% 0;top:241.89px;font-size:6.84px;line-height:6.84px;color:#6d6d6d;-webkit-text-stroke:0.08px #6d6d6d;">738 КБ</div>
<svg class="b" style="left:364.00px;top:250.73px" width="8.60" height="8.60" viewBox="0 0 16 16"><path d="M2.5 3 L5.5 0.5 H15.5 V5.5 H2.5 Z" fill="#c43cbf"/><rect x="2.5" y="5.5" width="13" height="5" fill="#3a2fc0"/><rect x="2.5" y="10.5" width="13" height="5" fill="#1fa83a"/><path d="M0.5 3 H2.5 V15.5 H0.5 Z" fill="#e4def2"/><path d="M1.5 5 V6 M1.5 8 V9 M1.5 11 V12 M1.5 13.5 V14.5" stroke="#7a6ac8" stroke-width="0.8"/><path d="M5 0.5 H8.5 L10.5 5.5 V15.5 H7.5 V6 Z" fill="#4e2a12"/><rect x="7" y="6.5" width="4" height="3" fill="#6a6a6a"/></svg>
<div class="t" style="left:374.60px;transform:scaleX(0.8929);transform-origin:0 0;top:252.81px;font-size:6.83px;line-height:6.83px;color:#1e1e1e;-webkit-text-stroke:0.14px #1e1e1e;">AirfieldsTexturesWinter.zip</div>
<div class="t" style="left:499.60px;transform:scaleX(0.8197);transform-origin:0 0;top:252.81px;font-size:6.82px;line-height:6.82px;color:#6d6d6d;-webkit-text-stroke:0.08px #6d6d6d;">23.02.2018 20:06</div>
<div class="t" style="left:561.90px;transform:scaleX(0.8929);transform-origin:0 0;top:252.86px;font-size:6.74px;line-height:6.74px;color:#6d6d6d;-webkit-text-stroke:0.08px #6d6d6d;">Архив ZIP - WinR...</div>
<div class="t" style="left:599.70px;width:59.00px;text-align:right;transform:scaleX(0.8475);transform-origin:100% 0;top:252.80px;font-size:6.84px;line-height:6.84px;color:#6d6d6d;-webkit-text-stroke:0.08px #6d6d6d;">9 492 КБ</div>
<svg class="b" style="left:364.00px;top:261.64px" width="8.60" height="8.60" viewBox="0 0 16 16"><path d="M2.5 3 L5.5 0.5 H15.5 V5.5 H2.5 Z" fill="#c43cbf"/><rect x="2.5" y="5.5" width="13" height="5" fill="#3a2fc0"/><rect x="2.5" y="10.5" width="13" height="5" fill="#1fa83a"/><path d="M0.5 3 H2.5 V15.5 H0.5 Z" fill="#e4def2"/><path d="M1.5 5 V6 M1.5 8 V9 M1.5 11 V12 M1.5 13.5 V14.5" stroke="#7a6ac8" stroke-width="0.8"/><path d="M5 0.5 H8.5 L10.5 5.5 V15.5 H7.5 V6 Z" fill="#4e2a12"/><rect x="7" y="6.5" width="4" height="3" fill="#6a6a6a"/></svg>
<div class="t" style="left:374.60px;transform:scaleX(0.8929);transform-origin:0 0;top:263.72px;font-size:6.83px;line-height:6.83px;color:#1e1e1e;-webkit-text-stroke:0.14px #1e1e1e;">American_Beech.zip</div>
<div class="t" style="left:499.60px;transform:scaleX(0.8197);transform-origin:0 0;top:263.72px;font-size:6.82px;line-height:6.82px;color:#6d6d6d;-webkit-text-stroke:0.08px #6d6d6d;">23.02.2018 20:06</div>
<div class="t" style="left:561.90px;transform:scaleX(0.8929);transform-origin:0 0;top:263.77px;font-size:6.74px;line-height:6.74px;color:#6d6d6d;-webkit-text-stroke:0.08px #6d6d6d;">Архив ZIP - WinR...</div>
<div class="t" style="left:599.70px;width:59.00px;text-align:right;transform:scaleX(0.8475);transform-origin:100% 0;top:263.71px;font-size:6.84px;line-height:6.84px;color:#6d6d6d;-webkit-text-stroke:0.08px #6d6d6d;">1 КБ</div>
<svg class="b" style="left:364.00px;top:272.56px" width="8.60" height="8.60" viewBox="0 0 16 16"><path d="M2.5 3 L5.5 0.5 H15.5 V5.5 H2.5 Z" fill="#c43cbf"/><rect x="2.5" y="5.5" width="13" height="5" fill="#3a2fc0"/><rect x="2.5" y="10.5" width="13" height="5" fill="#1fa83a"/><path d="M0.5 3 H2.5 V15.5 H0.5 Z" fill="#e4def2"/><path d="M1.5 5 V6 M1.5 8 V9 M1.5 11 V12 M1.5 13.5 V14.5" stroke="#7a6ac8" stroke-width="0.8"/><path d="M5 0.5 H8.5 L10.5 5.5 V15.5 H7.5 V6 Z" fill="#4e2a12"/><rect x="7" y="6.5" width="4" height="3" fill="#6a6a6a"/></svg>
<div class="t" style="left:374.60px;transform:scaleX(0.8929);transform-origin:0 0;top:274.63px;font-size:6.83px;line-height:6.83px;color:#1e1e1e;-webkit-text-stroke:0.14px #1e1e1e;">AmericanBeech.zip</div>
<div class="t" style="left:499.60px;transform:scaleX(0.8197);transform-origin:0 0;top:274.64px;font-size:6.82px;line-height:6.82px;color:#6d6d6d;-webkit-text-stroke:0.08px #6d6d6d;">23.02.2018 20:06</div>
<div class="t" style="left:561.90px;transform:scaleX(0.8929);transform-origin:0 0;top:274.68px;font-size:6.74px;line-height:6.74px;color:#6d6d6d;-webkit-text-stroke:0.08px #6d6d6d;">Архив ZIP - WinR...</div>
<div class="t" style="left:599.70px;width:59.00px;text-align:right;transform:scaleX(0.8475);transform-origin:100% 0;top:274.62px;font-size:6.84px;line-height:6.84px;color:#6d6d6d;-webkit-text-stroke:0.08px #6d6d6d;">1 КБ</div>
<svg class="b" style="left:364.00px;top:283.47px" width="8.60" height="8.60" viewBox="0 0 16 16"><path d="M2.5 3 L5.5 0.5 H15.5 V5.5 H2.5 Z" fill="#c43cbf"/><rect x="2.5" y="5.5" width="13" height="5" fill="#3a2fc0"/><rect x="2.5" y="10.5" width="13" height="5" fill="#1fa83a"/><path d="M0.5 3 H2.5 V15.5 H0.5 Z" fill="#e4def2"/><path d="M1.5 5 V6 M1.5 8 V9 M1.5 11 V12 M1.5 13.5 V14.5" stroke="#7a6ac8" stroke-width="0.8"/><path d="M5 0.5 H8.5 L10.5 5.5 V15.5 H7.5 V6 Z" fill="#4e2a12"/><rect x="7" y="6.5" width="4" height="3" fill="#6a6a6a"/></svg>
<div class="t" style="left:374.60px;transform:scaleX(0.8929);transform-origin:0 0;top:285.54px;font-size:6.83px;line-height:6.83px;color:#1e1e1e;-webkit-text-stroke:0.14px #1e1e1e;">AssetsPreview.zip</div>
<div class="t" style="left:499.60px;transform:scaleX(0.8197);transform-origin:0 0;top:285.55px;font-size:6.82px;line-height:6.82px;color:#6d6d6d;-webkit-text-stroke:0.08px #6d6d6d;">23.02.2018 20:06</div>
<div class="t" style="left:561.90px;transform:scaleX(0.8929);transform-origin:0 0;top:285.59px;font-size:6.74px;line-height:6.74px;color:#6d6d6d;-webkit-text-stroke:0.08px #6d6d6d;">Архив ZIP - WinR...</div>
<div class="t" style="left:599.70px;width:59.00px;text-align:right;transform:scaleX(0.8475);transform-origin:100% 0;top:285.54px;font-size:6.84px;line-height:6.84px;color:#6d6d6d;-webkit-text-stroke:0.08px #6d6d6d;">605 КБ</div>
<div class="b" style="left:361.80px;top:293.18px;width:298.60px;height:10.60px;background:#cce8ff;border:0.55px solid #99d1ff;box-sizing:border-box;"></div>
<svg class="b" style="left:364.00px;top:294.38px" width="8.60" height="8.60" viewBox="0 0 16 16"><path d="M2.5 3 L5.5 0.5 H15.5 V5.5 H2.5 Z" fill="#c43cbf"/><rect x="2.5" y="5.5" width="13" height="5" fill="#3a2fc0"/><rect x="2.5" y="10.5" width="13" height="5" fill="#1fa83a"/><path d="M0.5 3 H2.5 V15.5 H0.5 Z" fill="#e4def2"/><path d="M1.5 5 V6 M1.5 8 V9 M1.5 11 V12 M1.5 13.5 V14.5" stroke="#7a6ac8" stroke-width="0.8"/><path d="M5 0.5 H8.5 L10.5 5.5 V15.5 H7.5 V6 Z" fill="#4e2a12"/><rect x="7" y="6.5" width="4" height="3" fill="#6a6a6a"/></svg>
<div class="t" style="left:374.60px;transform:scaleX(0.8929);transform-origin:0 0;top:296.45px;font-size:6.83px;line-height:6.83px;color:#1e1e1e;-webkit-text-stroke:0.14px #1e1e1e;">Caucasus_Fir.zip</div>
<div class="t" style="left:499.60px;transform:scaleX(0.8197);transform-origin:0 0;top:296.46px;font-size:6.82px;line-height:6.82px;color:#6d6d6d;-webkit-text-stroke:0.08px #6d6d6d;">23.02.2018 20:06</div>
<div class="t" style="left:561.90px;transform:scaleX(0.8929);transform-origin:0 0;top:296.50px;font-size:6.74px;line-height:6.74px;color:#6d6d6d;-webkit-text-stroke:0.08px #6d6d6d;">Архив ZIP - WinR...</div>
<div class="t" style="left:599.70px;width:59.00px;text-align:right;transform:scaleX(0.8475);transform-origin:100% 0;top:296.45px;font-size:6.84px;line-height:6.84px;color:#6d6d6d;-webkit-text-stroke:0.08px #6d6d6d;">1 КБ</div>
<svg class="b" style="left:364.00px;top:305.29px" width="8.60" height="8.60" viewBox="0 0 16 16"><path d="M2.5 3 L5.5 0.5 H15.5 V5.5 H2.5 Z" fill="#c43cbf"/><rect x="2.5" y="5.5" width="13" height="5" fill="#3a2fc0"/><rect x="2.5" y="10.5" width="13" height="5" fill="#1fa83a"/><path d="M0.5 3 H2.5 V15.5 H0.5 Z" fill="#e4def2"/><path d="M1.5 5 V6 M1.5 8 V9 M1.5 11 V12 M1.5 13.5 V14.5" stroke="#7a6ac8" stroke-width="0.8"/><path d="M5 0.5 H8.5 L10.5 5.5 V15.5 H7.5 V6 Z" fill="#4e2a12"/><rect x="7" y="6.5" width="4" height="3" fill="#6a6a6a"/></svg>
<div class="t" style="left:374.60px;transform:scaleX(0.8929);transform-origin:0 0;top:307.37px;font-size:6.83px;line-height:6.83px;color:#1e1e1e;-webkit-text-stroke:0.14px #1e1e1e;">CloseupTexturesAutumn.min.zip</div>
<div class="t" style="left:499.60px;transform:scaleX(0.8197);transform-origin:0 0;top:307.37px;font-size:6.82px;line-height:6.82px;color:#6d6d6d;-webkit-text-stroke:0.08px #6d6d6d;">14.03.2018 18:40</div>
<div class="t" style="left:561.90px;transform:scaleX(0.8929);transform-origin:0 0;top:307.42px;font-size:6.74px;line-height:6.74px;color:#6d6d6d;-webkit-text-stroke:0.08px #6d6d6d;">Архив ZIP - WinR...</div>
<div class="t" style="left:599.70px;width:59.00px;text-align:right;transform:scaleX(0.8475);transform-origin:100% 0;top:307.36px;font-size:6.84px;line-height:6.84px;color:#6d6d6d;-webkit-text-stroke:0.08px #6d6d6d;">27 781 КБ</div>
<svg class="b" style="left:364.00px;top:316.20px" width="8.60" height="8.60" viewBox="0 0 16 16"><path d="M2.5 3 L5.5 0.5 H15.5 V5.5 H2.5 Z" fill="#c43cbf"/><rect x="2.5" y="5.5" width="13" height="5" fill="#3a2fc0"/><rect x="2.5" y="10.5" width="13" height="5" fill="#1fa83a"/><path d="M0.5 3 H2.5 V15.5 H0.5 Z" fill="#e4def2"/><path d="M1.5 5 V6 M1.5 8 V9 M1.5 11 V12 M1.5 13.5 V14.5" stroke="#7a6ac8" stroke-width="0.8"/><path d="M5 0.5 H8.5 L10.5 5.5 V15.5 H7.5 V6 Z" fill="#4e2a12"/><rect x="7" y="6.5" width="4" height="3" fill="#6a6a6a"/></svg>
<div class="t" style="left:374.60px;transform:scaleX(0.8929);transform-origin:0 0;top:318.28px;font-size:6.83px;line-height:6.83px;color:#1e1e1e;-webkit-text-stroke:0.14px #1e1e1e;">CloseupTexturesAutumn.zip</div>
<div class="t" style="left:499.60px;transform:scaleX(0.8197);transform-origin:0 0;top:318.28px;font-size:6.82px;line-height:6.82px;color:#6d6d6d;-webkit-text-stroke:0.08px #6d6d6d;">14.03.2018 18:40</div>
<div class="t" style="left:561.90px;transform:scaleX(0.8929);transform-origin:0 0;top:318.33px;font-size:6.74px;line-height:6.74px;color:#6d6d6d;-webkit-text-stroke:0.08px #6d6d6d;">Архив ZIP - WinR...</div>
<div class="t" style="left:599.70px;width:59.00px;text-align:right;transform:scaleX(0.8475);transform-origin:100% 0;top:318.27px;font-size:6.84px;line-height:6.84px;color:#6d6d6d;-webkit-text-stroke:0.08px #6d6d6d;">105 079 КБ</div>
<svg class="b" style="left:364.00px;top:327.12px" width="8.60" height="8.60" viewBox="0 0 16 16"><path d="M2.5 3 L5.5 0.5 H15.5 V5.5 H2.5 Z" fill="#c43cbf"/><rect x="2.5" y="5.5" width="13" height="5" fill="#3a2fc0"/><rect x="2.5" y="10.5" width="13" height="5" fill="#1fa83a"/><path d="M0.5 3 H2.5 V15.5 H0.5 Z" fill="#e4def2"/><path d="M1.5 5 V6 M1.5 8 V9 M1.5 11 V12 M1.5 13.5 V14.5" stroke="#7a6ac8" stroke-width="0.8"/><path d="M5 0.5 H8.5 L10.5 5.5 V15.5 H7.5 V6 Z" fill="#4e2a12"/><rect x="7" y="6.5" width="4" height="3" fill="#6a6a6a"/></svg>
<div class="t" style="left:374.60px;transform:scaleX(0.8929);transform-origin:0 0;top:329.19px;font-size:6.83px;line-height:6.83px;color:#1e1e1e;-webkit-text-stroke:0.14px #1e1e1e;">CloseupTexturesSpring.min.zip</div>
<div class="t" style="left:499.60px;transform:scaleX(0.8197);transform-origin:0 0;top:329.20px;font-size:6.82px;line-height:6.82px;color:#6d6d6d;-webkit-text-stroke:0.08px #6d6d6d;">14.03.2018 18:40</div>
<div class="t" style="left:561.90px;transform:scaleX(0.8929);transform-origin:0 0;top:329.24px;font-size:6.74px;line-height:6.74px;color:#6d6d6d;-webkit-text-stroke:0.08px #6d6d6d;">Архив ZIP - WinR...</div>
<div class="t" style="left:599.70px;width:59.00px;text-align:right;transform:scaleX(0.8475);transform-origin:100% 0;top:329.18px;font-size:6.84px;line-height:6.84px;color:#6d6d6d;-webkit-text-stroke:0.08px #6d6d6d;">27 843 КБ</div>
<svg class="b" style="left:364.00px;top:338.03px" width="8.60" height="8.60" viewBox="0 0 16 16"><path d="M2.5 3 L5.5 0.5 H15.5 V5.5 H2.5 Z" fill="#c43cbf"/><rect x="2.5" y="5.5" width="13" height="5" fill="#3a2fc0"/><rect x="2.5" y="10.5" width="13" height="5" fill="#1fa83a"/><path d="M0.5 3 H2.5 V15.5 H0.5 Z" fill="#e4def2"/><path d="M1.5 5 V6 M1.5 8 V9 M1.5 11 V12 M1.5 13.5 V14.5" stroke="#7a6ac8" stroke-width="0.8"/><path d="M5 0.5 H8.5 L10.5 5.5 V15.5 H7.5 V6 Z" fill="#4e2a12"/><rect x="7" y="6.5" width="4" height="3" fill="#6a6a6a"/></svg>
<div class="t" style="left:374.60px;transform:scaleX(0.8929);transform-origin:0 0;top:340.10px;font-size:6.83px;line-height:6.83px;color:#1e1e1e;-webkit-text-stroke:0.14px #1e1e1e;">CloseupTexturesSpring.zip</div>
<div class="t" style="left:499.60px;transform:scaleX(0.8197);transform-origin:0 0;top:340.11px;font-size:6.82px;line-height:6.82px;color:#6d6d6d;-webkit-text-stroke:0.08px #6d6d6d;">14.03.2018 18:40</div>
<div class="t" style="left:561.90px;transform:scaleX(0.8929);transform-origin:0 0;top:340.15px;font-size:6.74px;line-height:6.74px;color:#6d6d6d;-webkit-text-stroke:0.08px #6d6d6d;">Архив ZIP - WinR...</div>
<div class="t" style="left:599.70px;width:59.00px;text-align:right;transform:scaleX(0.8475);transform-origin:100% 0;top:340.10px;font-size:6.84px;line-height:6.84px;color:#6d6d6d;-webkit-text-stroke:0.08px #6d6d6d;">106 410 КБ</div>
<svg class="b" style="left:364.00px;top:348.94px" width="8.60" height="8.60" viewBox="0 0 16 16"><path d="M2.5 3 L5.5 0.5 H15.5 V5.5 H2.5 Z" fill="#c43cbf"/><rect x="2.5" y="5.5" width="13" height="5" fill="#3a2fc0"/><rect x="2.5" y="10.5" width="13" height="5" fill="#1fa83a"/><path d="M0.5 3 H2.5 V15.5 H0.5 Z" fill="#e4def2"/><path d="M1.5 5 V6 M1.5 8 V9 M1.5 11 V12 M1.5 13.5 V14.5" stroke="#7a6ac8" stroke-width="0.8"/><path d="M5 0.5 H8.5 L10.5 5.5 V15.5 H7.5 V6 Z" fill="#4e2a12"/><rect x="7" y="6.5" width="4" height="3" fill="#6a6a6a"/></svg>
<div class="t" style="left:374.60px;transform:scaleX(0.8929);transform-origin:0 0;top:351.01px;font-size:6.83px;line-height:6.83px;color:#1e1e1e;-webkit-text-stroke:0.14px #1e1e1e;">CloseupTexturesSummer.min.zip</div>
<div class="t" style="left:499.60px;transform:scaleX(0.8197);transform-origin:0 0;top:351.02px;font-size:6.82px;line-height:6.82px;color:#6d6d6d;-webkit-text-stroke:0.08px #6d6d6d;">23.02.2018 20:06</div>
<div class="t" style="left:561.90px;transform:scaleX(0.8929);transform-origin:0 0;top:351.06px;font-size:6.74px;line-height:6.74px;color:#6d6d6d;-webkit-text-stroke:0.08px #6d6d6d;">Архив ZIP - WinR...</div>
<div class="t" style="left:599.70px;width:59.00px;text-align:right;transform:scaleX(0.8475);transform-origin:100% 0;top:351.01px;font-size:6.84px;line-height:6.84px;color:#6d6d6d;-webkit-text-stroke:0.08px #6d6d6d;">27 889 КБ</div>
<svg class="b" style="left:364.00px;top:359.85px" width="8.60" height="8.60" viewBox="0 0 16 16"><path d="M2.5 3 L5.5 0.5 H15.5 V5.5 H2.5 Z" fill="#c43cbf"/><rect x="2.5" y="5.5" width="13" height="5" fill="#3a2fc0"/><rect x="2.5" y="10.5" width="13" height="5" fill="#1fa83a"/><path d="M0.5 3 H2.5 V15.5 H0.5 Z" fill="#e4def2"/><path d="M1.5 5 V6 M1.5 8 V9 M1.5 11 V12 M1.5 13.5 V14.5" stroke="#7a6ac8" stroke-width="0.8"/><path d="M5 0.5 H8.5 L10.5 5.5 V15.5 H7.5 V6 Z" fill="#4e2a12"/><rect x="7" y="6.5" width="4" height="3" fill="#6a6a6a"/></svg>
<div class="t" style="left:374.60px;transform:scaleX(0.8929);transform-origin:0 0;top:361.93px;font-size:6.83px;line-height:6.83px;color:#1e1e1e;-webkit-text-stroke:0.14px #1e1e1e;">CloseupTexturesSummer.zip</div>
<div class="t" style="left:499.60px;transform:scaleX(0.8197);transform-origin:0 0;top:361.93px;font-size:6.82px;line-height:6.82px;color:#6d6d6d;-webkit-text-stroke:0.08px #6d6d6d;">23.02.2018 20:06</div>
<div class="t" style="left:561.90px;transform:scaleX(0.8929);transform-origin:0 0;top:361.98px;font-size:6.74px;line-height:6.74px;color:#6d6d6d;-webkit-text-stroke:0.08px #6d6d6d;">Архив ZIP - WinR...</div>
<div class="t" style="left:599.70px;width:59.00px;text-align:right;transform:scaleX(0.8475);transform-origin:100% 0;top:361.92px;font-size:6.84px;line-height:6.84px;color:#6d6d6d;-webkit-text-stroke:0.08px #6d6d6d;">106 800 КБ</div>
<svg class="b" style="left:364.00px;top:370.76px" width="8.60" height="8.60" viewBox="0 0 16 16"><path d="M2.5 3 L5.5 0.5 H15.5 V5.5 H2.5 Z" fill="#c43cbf"/><rect x="2.5" y="5.5" width="13" height="5" fill="#3a2fc0"/><rect x="2.5" y="10.5" width="13" height="5" fill="#1fa83a"/><path d="M0.5 3 H2.5 V15.5 H0.5 Z" fill="#e4def2"/><path d="M1.5 5 V6 M1.5 8 V9 M1.5 11 V12 M1.5 13.5 V14.5" stroke="#7a6ac8" stroke-width="0.8"/><path d="M5 0.5 H8.5 L10.5 5.5 V15.5 H7.5 V6 Z" fill="#4e2a12"/><rect x="7" y="6.5" width="4" height="3" fill="#6a6a6a"/></svg>
<div class="t" style="left:374.60px;transform:scaleX(0.8929);transform-origin:0 0;top:372.84px;font-size:6.83px;line-height:6.83px;color:#1e1e1e;-webkit-text-stroke:0.14px #1e1e1e;">CloseupTexturesWinter.min.zip</div>
<div class="t" style="left:499.60px;transform:scaleX(0.8197);transform-origin:0 0;top:372.84px;font-size:6.82px;line-height:6.82px;color:#6d6d6d;-webkit-text-stroke:0.08px #6d6d6d;">23.02.2018 20:06</div>
<div class="t" style="left:561.90px;transform:scaleX(0.8929);transform-origin:0 0;top:372.89px;font-size:6.74px;line-height:6.74px;color:#6d6d6d;-webkit-text-stroke:0.08px #6d6d6d;">Архив ZIP - WinR...</div>
<div class="t" style="left:599.70px;width:59.00px;text-align:right;transform:scaleX(0.8475);transform-origin:100% 0;top:372.83px;font-size:6.84px;line-height:6.84px;color:#6d6d6d;-webkit-text-stroke:0.08px #6d6d6d;">17 477 КБ</div>
<svg class="b" style="left:364.00px;top:381.68px" width="8.60" height="8.60" viewBox="0 0 16 16"><path d="M2.5 3 L5.5 0.5 H15.5 V5.5 H2.5 Z" fill="#c43cbf"/><rect x="2.5" y="5.5" width="13" height="5" fill="#3a2fc0"/><rect x="2.5" y="10.5" width="13" height="5" fill="#1fa83a"/><path d="M0.5 3 H2.5 V15.5 H0.5 Z" fill="#e4def2"/><path d="M1.5 5 V6 M1.5 8 V9 M1.5 11 V12 M1.5 13.5 V14.5" stroke="#7a6ac8" stroke-width="0.8"/><path d="M5 0.5 H8.5 L10.5 5.5 V15.5 H7.5 V6 Z" fill="#4e2a12"/><rect x="7" y="6.5" width="4" height="3" fill="#6a6a6a"/></svg>
<div class="t" style="left:374.60px;transform:scaleX(0.8929);transform-origin:0 0;top:383.75px;font-size:6.83px;line-height:6.83px;color:#1e1e1e;-webkit-text-stroke:0.14px #1e1e1e;">CloseupTexturesWinter.zip</div>
<div class="t" style="left:499.60px;transform:scaleX(0.8197);transform-origin:0 0;top:383.76px;font-size:6.82px;line-height:6.82px;color:#6d6d6d;-webkit-text-stroke:0.08px #6d6d6d;">23.02.2018 20:06</div>
<div class="t" style="left:561.90px;transform:scaleX(0.8929);transform-origin:0 0;top:383.80px;font-size:6.74px;line-height:6.74px;color:#6d6d6d;-webkit-text-stroke:0.08px #6d6d6d;">Архив ZIP - WinR...</div>
<div class="t" style="left:599.70px;width:59.00px;text-align:right;transform:scaleX(0.8475);transform-origin:100% 0;top:383.74px;font-size:6.84px;line-height:6.84px;color:#6d6d6d;-webkit-text-stroke:0.08px #6d6d6d;">68 975 КБ</div>
<svg class="b" style="left:364.00px;top:392.59px" width="8.60" height="8.60" viewBox="0 0 16 16"><path d="M2.5 3 L5.5 0.5 H15.5 V5.5 H2.5 Z" fill="#c43cbf"/><rect x="2.5" y="5.5" width="13" height="5" fill="#3a2fc0"/><rect x="2.5" y="10.5" width="13" height="5" fill="#1fa83a"/><path d="M0.5 3 H2.5 V15.5 H0.5 Z" fill="#e4def2"/><path d="M1.5 5 V6 M1.5 8 V9 M1.5 11 V12 M1.5 13.5 V14.5" stroke="#7a6ac8" stroke-width="0.8"/><path d="M5 0.5 H8.5 L10.5 5.5 V15.5 H7.5 V6 Z" fill="#4e2a12"/><rect x="7" y="6.5" width="4" height="3" fill="#6a6a6a"/></svg>
<div class="t" style="left:374.60px;transform:scaleX(0.8929);transform-origin:0 0;top:394.66px;font-size:6.83px;line-height:6.83px;color:#1e1e1e;-webkit-text-stroke:0.14px #1e1e1e;">cracksMask.min.zip</div>
<div class="t" style="left:499.60px;transform:scaleX(0.8197);transform-origin:0 0;top:394.67px;font-size:6.82px;line-height:6.82px;color:#6d6d6d;-webkit-text-stroke:0.08px #6d6d6d;">23.02.2018 20:06</div>
<div class="t" style="left:561.90px;transform:scaleX(0.8929);transform-origin:0 0;top:394.71px;font-size:6.74px;line-height:6.74px;color:#6d6d6d;-webkit-text-stroke:0.08px #6d6d6d;">Архив ZIP - WinR...</div>
<div class="t" style="left:599.70px;width:59.00px;text-align:right;transform:scaleX(0.8475);transform-origin:100% 0;top:394.66px;font-size:6.84px;line-height:6.84px;color:#6d6d6d;-webkit-text-stroke:0.08px #6d6d6d;">3 117 КБ</div>
<svg class="b" style="left:364.00px;top:403.50px" width="8.60" height="8.60" viewBox="0 0 16 16"><path d="M2.5 3 L5.5 0.5 H15.5 V5.5 H2.5 Z" fill="#c43cbf"/><rect x="2.5" y="5.5" width="13" height="5" fill="#3a2fc0"/><rect x="2.5" y="10.5" width="13" height="5" fill="#1fa83a"/><path d="M0.5 3 H2.5 V15.5 H0.5 Z" fill="#e4def2"/><path d="M1.5 5 V6 M1.5 8 V9 M1.5 11 V12 M1.5 13.5 V14.5" stroke="#7a6ac8" stroke-width="0.8"/><path d="M5 0.5 H8.5 L10.5 5.5 V15.5 H7.5 V6 Z" fill="#4e2a12"/><rect x="7" y="6.5" width="4" height="3" fill="#6a6a6a"/></svg>
<div class="t" style="left:374.60px;transform:scaleX(0.8929);transform-origin:0 0;top:405.57px;font-size:6.83px;line-height:6.83px;color:#1e1e1e;-webkit-text-stroke:0.14px #1e1e1e;">cracksMask.nm.min.zip</div>
<div class="t" style="left:499.60px;transform:scaleX(0.8197);transform-origin:0 0;top:405.58px;font-size:6.82px;line-height:6.82px;color:#6d6d6d;-webkit-text-stroke:0.08px #6d6d6d;">23.02.2018 20:06</div>
<div class="t" style="left:561.90px;transform:scaleX(0.8929);transform-origin:0 0;top:405.62px;font-size:6.74px;line-height:6.74px;color:#6d6d6d;-webkit-text-stroke:0.08px #6d6d6d;">Архив ZIP - WinR...</div>
<div class="t" style="left:599.70px;width:59.00px;text-align:right;transform:scaleX(0.8475);transform-origin:100% 0;top:405.57px;font-size:6.84px;line-height:6.84px;color:#6d6d6d;-webkit-text-stroke:0.08px #6d6d6d;">5 236 КБ</div>
<svg class="b" style="left:364.00px;top:414.41px" width="8.60" height="8.60" viewBox="0 0 16 16"><path d="M2.5 3 L5.5 0.5 H15.5 V5.5 H2.5 Z" fill="#c43cbf"/><rect x="2.5" y="5.5" width="13" height="5" fill="#3a2fc0"/><rect x="2.5" y="10.5" width="13" height="5" fill="#1fa83a"/><path d="M0.5 3 H2.5 V15.5 H0.5 Z" fill="#e4def2"/><path d="M1.5 5 V6 M1.5 8 V9 M1.5 11 V12 M1.5 13.5 V14.5" stroke="#7a6ac8" stroke-width="0.8"/><path d="M5 0.5 H8.5 L10.5 5.5 V15.5 H7.5 V6 Z" fill="#4e2a12"/><rect x="7" y="6.5" width="4" height="3" fill="#6a6a6a"/></svg>
<div class="t" style="left:374.60px;transform:scaleX(0.8929);transform-origin:0 0;top:416.49px;font-size:6.83px;line-height:6.83px;color:#1e1e1e;-webkit-text-stroke:0.14px #1e1e1e;">cracksMask.nm.zip</div>
<div class="t" style="left:499.60px;transform:scaleX(0.8197);transform-origin:0 0;top:416.49px;font-size:6.82px;line-height:6.82px;color:#6d6d6d;-webkit-text-stroke:0.08px #6d6d6d;">23.02.2018 20:06</div>
<div class="t" style="left:561.90px;transform:scaleX(0.8929);transform-origin:0 0;top:416.54px;font-size:6.74px;line-height:6.74px;color:#6d6d6d;-webkit-text-stroke:0.08px #6d6d6d;">Архив ZIP - WinR...</div>
<div class="t" style="left:599.70px;width:59.00px;text-align:right;transform:scaleX(0.8475);transform-origin:100% 0;top:416.48px;font-size:6.84px;line-height:6.84px;color:#6d6d6d;-webkit-text-stroke:0.08px #6d6d6d;">21 036 КБ</div>
<svg class="b" style="left:364.00px;top:425.32px" width="8.60" height="8.60" viewBox="0 0 16 16"><path d="M2.5 3 L5.5 0.5 H15.5 V5.5 H2.5 Z" fill="#c43cbf"/><rect x="2.5" y="5.5" width="13" height="5" fill="#3a2fc0"/><rect x="2.5" y="10.5" width="13" height="5" fill="#1fa83a"/><path d="M0.5 3 H2.5 V15.5 H0.5 Z" fill="#e4def2"/><path d="M1.5 5 V6 M1.5 8 V9 M1.5 11 V12 M1.5 13.5 V14.5" stroke="#7a6ac8" stroke-width="0.8"/><path d="M5 0.5 H8.5 L10.5 5.5 V15.5 H7.5 V6 Z" fill="#4e2a12"/><rect x="7" y="6.5" width="4" height="3" fill="#6a6a6a"/></svg>
<div class="t" style="left:374.60px;transform:scaleX(0.8929);transform-origin:0 0;top:427.40px;font-size:6.83px;line-height:6.83px;color:#1e1e1e;-webkit-text-stroke:0.14px #1e1e1e;">cracksMask.zip</div>
<div class="t" style="left:499.60px;transform:scaleX(0.8197);transform-origin:0 0;top:427.40px;font-size:6.82px;line-height:6.82px;color:#6d6d6d;-webkit-text-stroke:0.08px #6d6d6d;">23.02.2018 20:06</div>
<div class="t" style="left:561.90px;transform:scaleX(0.8929);transform-origin:0 0;top:427.45px;font-size:6.74px;line-height:6.74px;color:#6d6d6d;-webkit-text-stroke:0.08px #6d6d6d;">Архив ZIP - WinR...</div>
<div class="t" style="left:599.70px;width:59.00px;text-align:right;transform:scaleX(0.8475);transform-origin:100% 0;top:427.39px;font-size:6.84px;line-height:6.84px;color:#6d6d6d;-webkit-text-stroke:0.08px #6d6d6d;">11 819 КБ</div>
<svg class="b" style="left:364.00px;top:436.24px" width="8.60" height="8.60" viewBox="0 0 16 16"><path d="M2.5 3 L5.5 0.5 H15.5 V5.5 H2.5 Z" fill="#c43cbf"/><rect x="2.5" y="5.5" width="13" height="5" fill="#3a2fc0"/><rect x="2.5" y="10.5" width="13" height="5" fill="#1fa83a"/><path d="M0.5 3 H2.5 V15.5 H0.5 Z" fill="#e4def2"/><path d="M1.5 5 V6 M1.5 8 V9 M1.5 11 V12 M1.5 13.5 V14.5" stroke="#7a6ac8" stroke-width="0.8"/><path d="M5 0.5 H8.5 L10.5 5.5 V15.5 H7.5 V6 Z" fill="#4e2a12"/><rect x="7" y="6.5" width="4" height="3" fill="#6a6a6a"/></svg>
<div class="t" style="left:374.60px;transform:scaleX(0.8929);transform-origin:0 0;top:438.31px;font-size:6.83px;line-height:6.83px;color:#1e1e1e;-webkit-text-stroke:0.14px #1e1e1e;">Cypress_Oak.zip</div>
<div class="t" style="left:499.60px;transform:scaleX(0.8197);transform-origin:0 0;top:438.32px;font-size:6.82px;line-height:6.82px;color:#6d6d6d;-webkit-text-stroke:0.08px #6d6d6d;">23.02.2018 20:06</div>
<div class="t" style="left:561.90px;transform:scaleX(0.8929);transform-origin:0 0;top:438.36px;font-size:6.74px;line-height:6.74px;color:#6d6d6d;-webkit-text-stroke:0.08px #6d6d6d;">Архив ZIP - WinR...</div>
<div class="t" style="left:599.70px;width:59.00px;text-align:right;transform:scaleX(0.8475);transform-origin:100% 0;top:438.30px;font-size:6.84px;line-height:6.84px;color:#6d6d6d;-webkit-text-stroke:0.08px #6d6d6d;">1 КБ</div>
<svg class="b" style="left:364.00px;top:447.15px" width="8.60" height="8.60" viewBox="0 0 16 16"><path d="M2.5 3 L5.5 0.5 H15.5 V5.5 H2.5 Z" fill="#c43cbf"/><rect x="2.5" y="5.5" width="13" height="5" fill="#3a2fc0"/><rect x="2.5" y="10.5" width="13" height="5" fill="#1fa83a"/><path d="M0.5 3 H2.5 V15.5 H0.5 Z" fill="#e4def2"/><path d="M1.5 5 V6 M1.5 8 V9 M1.5 11 V12 M1.5 13.5 V14.5" stroke="#7a6ac8" stroke-width="0.8"/><path d="M5 0.5 H8.5 L10.5 5.5 V15.5 H7.5 V6 Z" fill="#4e2a12"/><rect x="7" y="6.5" width="4" height="3" fill="#6a6a6a"/></svg>
<div class="t" style="left:374.60px;transform:scaleX(0.8929);transform-origin:0 0;top:449.22px;font-size:6.83px;line-height:6.83px;color:#1e1e1e;-webkit-text-stroke:0.14px #1e1e1e;">decal.min.zip</div>
<div class="t" style="left:499.60px;transform:scaleX(0.8197);transform-origin:0 0;top:449.23px;font-size:6.82px;line-height:6.82px;color:#6d6d6d;-webkit-text-stroke:0.08px #6d6d6d;">14.03.2018 18:40</div>
<div class="t" style="left:561.90px;transform:scaleX(0.8929);transform-origin:0 0;top:449.27px;font-size:6.74px;line-height:6.74px;color:#6d6d6d;-webkit-text-stroke:0.08px #6d6d6d;">Архив ZIP - WinR...</div>
<div class="t" style="left:599.70px;width:59.00px;text-align:right;transform:scaleX(0.8475);transform-origin:100% 0;top:449.22px;font-size:6.84px;line-height:6.84px;color:#6d6d6d;-webkit-text-stroke:0.08px #6d6d6d;">1 162 КБ</div>
<svg class="b" style="left:364.00px;top:458.06px" width="8.60" height="8.60" viewBox="0 0 16 16"><path d="M2.5 3 L5.5 0.5 H15.5 V5.5 H2.5 Z" fill="#c43cbf"/><rect x="2.5" y="5.5" width="13" height="5" fill="#3a2fc0"/><rect x="2.5" y="10.5" width="13" height="5" fill="#1fa83a"/><path d="M0.5 3 H2.5 V15.5 H0.5 Z" fill="#e4def2"/><path d="M1.5 5 V6 M1.5 8 V9 M1.5 11 V12 M1.5 13.5 V14.5" stroke="#7a6ac8" stroke-width="0.8"/><path d="M5 0.5 H8.5 L10.5 5.5 V15.5 H7.5 V6 Z" fill="#4e2a12"/><rect x="7" y="6.5" width="4" height="3" fill="#6a6a6a"/></svg>
<div class="t" style="left:374.60px;transform:scaleX(0.8929);transform-origin:0 0;top:460.13px;font-size:6.83px;line-height:6.83px;color:#1e1e1e;-webkit-text-stroke:0.14px #1e1e1e;">decal.zip</div>
<div class="t" style="left:499.60px;transform:scaleX(0.8197);transform-origin:0 0;top:460.14px;font-size:6.82px;line-height:6.82px;color:#6d6d6d;-webkit-text-stroke:0.08px #6d6d6d;">14.03.2018 18:40</div>
<div class="t" style="left:561.90px;transform:scaleX(0.8929);transform-origin:0 0;top:460.18px;font-size:6.74px;line-height:6.74px;color:#6d6d6d;-webkit-text-stroke:0.08px #6d6d6d;">Архив ZIP - WinR...</div>
<div class="t" style="left:599.70px;width:59.00px;text-align:right;transform:scaleX(0.8475);transform-origin:100% 0;top:460.13px;font-size:6.84px;line-height:6.84px;color:#6d6d6d;-webkit-text-stroke:0.08px #6d6d6d;">4 634 КБ</div>
<svg class="b" style="left:364.00px;top:468.97px" width="8.60" height="8.60" viewBox="0 0 16 16"><path d="M2.5 3 L5.5 0.5 H15.5 V5.5 H2.5 Z" fill="#c43cbf"/><rect x="2.5" y="5.5" width="13" height="5" fill="#3a2fc0"/><rect x="2.5" y="10.5" width="13" height="5" fill="#1fa83a"/><path d="M0.5 3 H2.5 V15.5 H0.5 Z" fill="#e4def2"/><path d="M1.5 5 V6 M1.5 8 V9 M1.5 11 V12 M1.5 13.5 V14.5" stroke="#7a6ac8" stroke-width="0.8"/><path d="M5 0.5 H8.5 L10.5 5.5 V15.5 H7.5 V6 Z" fill="#4e2a12"/><rect x="7" y="6.5" width="4" height="3" fill="#6a6a6a"/></svg>
<div class="t" style="left:374.60px;transform:scaleX(0.8929);transform-origin:0 0;top:471.05px;font-size:6.83px;line-height:6.83px;color:#1e1e1e;-webkit-text-stroke:0.14px #1e1e1e;">DefaultLandTexturesAutumn.zip</div>
<div class="t" style="left:499.60px;transform:scaleX(0.8197);transform-origin:0 0;top:471.05px;font-size:6.82px;line-height:6.82px;color:#6d6d6d;-webkit-text-stroke:0.08px #6d6d6d;">23.02.2018 20:06</div>
<div class="t" style="left:561.90px;transform:scaleX(0.8929);transform-origin:0 0;top:471.10px;font-size:6.74px;line-height:6.74px;color:#6d6d6d;-webkit-text-stroke:0.08px #6d6d6d;">Архив ZIP - WinR...</div>
<div class="t" style="left:599.70px;width:59.00px;text-align:right;transform:scaleX(0.8475);transform-origin:100% 0;top:471.04px;font-size:6.84px;line-height:6.84px;color:#6d6d6d;-webkit-text-stroke:0.08px #6d6d6d;">2 991 КБ</div>
<svg class="b" style="left:364.00px;top:479.88px" width="8.60" height="8.60" viewBox="0 0 16 16"><path d="M2.5 3 L5.5 0.5 H15.5 V5.5 H2.5 Z" fill="#c43cbf"/><rect x="2.5" y="5.5" width="13" height="5" fill="#3a2fc0"/><rect x="2.5" y="10.5" width="13" height="5" fill="#1fa83a"/><path d="M0.5 3 H2.5 V15.5 H0.5 Z" fill="#e4def2"/><path d="M1.5 5 V6 M1.5 8 V9 M1.5 11 V12 M1.5 13.5 V14.5" stroke="#7a6ac8" stroke-width="0.8"/><path d="M5 0.5 H8.5 L10.5 5.5 V15.5 H7.5 V6 Z" fill="#4e2a12"/><rect x="7" y="6.5" width="4" height="3" fill="#6a6a6a"/></svg>
<div class="t" style="left:374.60px;transform:scaleX(0.8929);transform-origin:0 0;top:481.96px;font-size:6.83px;line-height:6.83px;color:#1e1e1e;-webkit-text-stroke:0.14px #1e1e1e;">DefaultLandTexturesSpring.zip</div>
<div class="t" style="left:499.60px;transform:scaleX(0.8197);transform-origin:0 0;top:481.96px;font-size:6.82px;line-height:6.82px;color:#6d6d6d;-webkit-text-stroke:0.08px #6d6d6d;">23.02.2018 20:06</div>
<div class="t" style="left:561.90px;transform:scaleX(0.8929);transform-origin:0 0;top:482.01px;font-size:6.74px;line-height:6.74px;color:#6d6d6d;-webkit-text-stroke:0.08px #6d6d6d;">Архив ZIP - WinR...</div>
<div class="t" style="left:599.70px;width:59.00px;text-align:right;transform:scaleX(0.8475);transform-origin:100% 0;top:481.95px;font-size:6.84px;line-height:6.84px;color:#6d6d6d;-webkit-text-stroke:0.08px #6d6d6d;">3 032 КБ</div>
<svg class="b" style="left:364.00px;top:490.80px" width="8.60" height="8.60" viewBox="0 0 16 16"><path d="M2.5 3 L5.5 0.5 H15.5 V5.5 H2.5 Z" fill="#c43cbf"/><rect x="2.5" y="5.5" width="13" height="5" fill="#3a2fc0"/><rect x="2.5" y="10.5" width="13" height="5" fill="#1fa83a"/><path d="M0.5 3 H2.5 V15.5 H0.5 Z" fill="#e4def2"/><path d="M1.5 5 V6 M1.5 8 V9 M1.5 11 V12 M1.5 13.5 V14.5" stroke="#7a6ac8" stroke-width="0.8"/><path d="M5 0.5 H8.5 L10.5 5.5 V15.5 H7.5 V6 Z" fill="#4e2a12"/><rect x="7" y="6.5" width="4" height="3" fill="#6a6a6a"/></svg>
<div class="t" style="left:374.60px;transform:scaleX(0.8929);transform-origin:0 0;top:492.87px;font-size:6.83px;line-height:6.83px;color:#1e1e1e;-webkit-text-stroke:0.14px #1e1e1e;">DefaultLandTexturesSummer.zip</div>
<div class="t" style="left:499.60px;transform:scaleX(0.8197);transform-origin:0 0;top:492.88px;font-size:6.82px;line-height:6.82px;color:#6d6d6d;-webkit-text-stroke:0.08px #6d6d6d;">14.03.2018 18:40</div>
<div class="t" style="left:561.90px;transform:scaleX(0.8929);transform-origin:0 0;top:492.92px;font-size:6.74px;line-height:6.74px;color:#6d6d6d;-webkit-text-stroke:0.08px #6d6d6d;">Архив ZIP - WinR...</div>
<div class="t" style="left:599.70px;width:59.00px;text-align:right;transform:scaleX(0.8475);transform-origin:100% 0;top:492.86px;font-size:6.84px;line-height:6.84px;color:#6d6d6d;-webkit-text-stroke:0.08px #6d6d6d;">7 809 КБ</div>
<svg class="b" style="left:364.00px;top:501.71px" width="8.60" height="8.60" viewBox="0 0 16 16"><path d="M2.5 3 L5.5 0.5 H15.5 V5.5 H2.5 Z" fill="#c43cbf"/><rect x="2.5" y="5.5" width="13" height="5" fill="#3a2fc0"/><rect x="2.5" y="10.5" width="13" height="5" fill="#1fa83a"/><path d="M0.5 3 H2.5 V15.5 H0.5 Z" fill="#e4def2"/><path d="M1.5 5 V6 M1.5 8 V9 M1.5 11 V12 M1.5 13.5 V14.5" stroke="#7a6ac8" stroke-width="0.8"/><path d="M5 0.5 H8.5 L10.5 5.5 V15.5 H7.5 V6 Z" fill="#4e2a12"/><rect x="7" y="6.5" width="4" height="3" fill="#6a6a6a"/></svg>
<div class="t" style="left:374.60px;transform:scaleX(0.8929);transform-origin:0 0;top:503.78px;font-size:6.83px;line-height:6.83px;color:#1e1e1e;-webkit-text-stroke:0.14px #1e1e1e;">DefaultLandTexturesWinter.zip</div>
<div class="t" style="left:499.60px;transform:scaleX(0.8197);transform-origin:0 0;top:503.79px;font-size:6.82px;line-height:6.82px;color:#6d6d6d;-webkit-text-stroke:0.08px #6d6d6d;">23.02.2018 20:06</div>
<div class="t" style="left:561.90px;transform:scaleX(0.8929);transform-origin:0 0;top:503.83px;font-size:6.74px;line-height:6.74px;color:#6d6d6d;-webkit-text-stroke:0.08px #6d6d6d;">Архив ZIP - WinR...</div>
<div class="t" style="left:599.70px;width:59.00px;text-align:right;transform:scaleX(0.8475);transform-origin:100% 0;top:503.78px;font-size:6.84px;line-height:6.84px;color:#6d6d6d;-webkit-text-stroke:0.08px #6d6d6d;">2 623 КБ</div>
<svg class="b" style="left:364.00px;top:512.62px" width="8.60" height="8.60" viewBox="0 0 16 16"><path d="M2.5 3 L5.5 0.5 H15.5 V5.5 H2.5 Z" fill="#c43cbf"/><rect x="2.5" y="5.5" width="13" height="5" fill="#3a2fc0"/><rect x="2.5" y="10.5" width="13" height="5" fill="#1fa83a"/><path d="M0.5 3 H2.5 V15.5 H0.5 Z" fill="#e4def2"/><path d="M1.5 5 V6 M1.5 8 V9 M1.5 11 V12 M1.5 13.5 V14.5" stroke="#7a6ac8" stroke-width="0.8"/><path d="M5 0.5 H8.5 L10.5 5.5 V15.5 H7.5 V6 Z" fill="#4e2a12"/><rect x="7" y="6.5" width="4" height="3" fill="#6a6a6a"/></svg>
<div class="t" style="left:374.60px;transform:scaleX(0.8929);transform-origin:0 0;top:514.69px;font-size:6.83px;line-height:6.83px;color:#1e1e1e;-webkit-text-stroke:0.14px #1e1e1e;">dirtMask.min.zip</div>
<div class="t" style="left:499.60px;transform:scaleX(0.8197);transform-origin:0 0;top:514.70px;font-size:6.82px;line-height:6.82px;color:#6d6d6d;-webkit-text-stroke:0.08px #6d6d6d;">23.02.2018 20:06</div>
<div class="t" style="left:561.90px;transform:scaleX(0.8929);transform-origin:0 0;top:514.74px;font-size:6.74px;line-height:6.74px;color:#6d6d6d;-webkit-text-stroke:0.08px #6d6d6d;">Архив ZIP - WinR...</div>
<div class="t" style="left:599.70px;width:59.00px;text-align:right;transform:scaleX(0.8475);transform-origin:100% 0;top:514.69px;font-size:6.84px;line-height:6.84px;color:#6d6d6d;-webkit-text-stroke:0.08px #6d6d6d;">2 023 КБ</div>
<svg class="b" style="left:0;top:0" width="1000" height="562" viewBox="0 0 1000 562"><path d="M363.4 131.4 C362.8 131.1 360.0 129.9 359.8 129.4 C359.6 128.9 360.6 128.6 362.2 128.2 C363.8 127.8 366.6 127.4 369.4 127.0 C372.2 126.6 373.4 126.1 379.0 125.8 C384.6 125.5 397.0 125.2 403.0 125.0 C409.0 124.8 408.0 124.5 415.0 124.3 C422.0 124.1 435.0 124.1 445.0 124.1 C455.0 124.1 467.0 124.1 475.0 124.4 C483.0 124.7 484.0 125.8 493.0 126.1 C502.0 126.4 517.0 126.5 529.0 126.5 C541.0 126.5 553.0 126.0 565.0 126.1 C577.0 126.2 592.0 126.4 601.0 127.0 C610.0 127.6 613.4 128.0 619.0 129.9 C624.6 131.8 630.6 135.8 634.6 138.5 C638.6 141.2 641.0 143.2 643.0 146.0 C645.0 148.8 645.9 151.7 646.6 155.0 C647.3 158.3 647.4 162.6 647.3 165.9 C647.2 169.2 646.5 172.1 646.0 175.0 C645.5 177.9 645.6 179.8 644.4 183.5 C643.1 187.2 641.1 192.8 638.5 197.2 C635.9 201.6 631.6 207.0 628.7 209.9 C625.8 212.8 624.2 213.8 620.9 214.8 C617.6 215.8 617.5 215.6 609.0 215.8 C600.5 216.0 583.2 215.6 570.0 215.8 C556.8 216.0 543.3 216.6 530.0 217.0 C516.7 217.4 506.7 218.0 490.0 218.5 C473.3 219.0 445.0 219.8 430.0 220.0 C415.0 220.2 407.5 219.8 400.0 219.6 C392.5 219.3 389.7 218.8 385.0 218.5 C380.3 218.2 375.2 218.0 372.0 217.5 C368.8 217.0 367.8 216.7 366.0 215.6 C364.2 214.5 362.4 212.3 361.5 211.0 C360.6 209.7 361.0 210.4 360.6 207.9 C360.2 205.4 359.6 199.8 359.4 196.0 C359.1 192.2 359.1 189.7 359.1 185.4 C359.1 181.1 359.2 174.7 359.3 170.0 C359.4 165.3 359.4 161.2 359.7 157.4 C360.0 153.6 360.5 150.1 361.0 147.0 C361.5 143.9 362.1 141.0 362.5 138.7 C362.9 136.4 363.1 133.9 363.2 133.0" stroke="#ec4d5e" stroke-width="0.7" fill="none" stroke-linejoin="round" stroke-linecap="round"/></svg>
<div class="b" style="left:684.80px;top:113.50px;width:7.40px;height:407.50px;background:#f0f0f0;"></div>
<svg class="b" style="left:685.50px;top:115.50px" width="6.00" height="4.00" viewBox="0 0 6 4"><path d="M0.8 3.2 L3 1 L5.2 3.2" stroke="#444" stroke-width="0.7" fill="none"/></svg>
<div class="b" style="left:685.10px;top:122.70px;width:6.80px;height:113.30px;background:#cdcdcd;"></div>
<svg class="b" style="left:685.50px;top:514.00px" width="6.00" height="4.00" viewBox="0 0 6 4"><path d="M0.8 0.8 L3 3 L5.2 0.8" stroke="#444" stroke-width="0.7" fill="none"/></svg>
<div class="t" style="left:263.40px;transform:scaleX(0.8929);transform-origin:0 0;top:525.32px;font-size:6.57px;line-height:6.57px;color:#1e3a6e;-webkit-text-stroke:0.08px #1e3a6e;">Элементов: 122</div>
<div class="b" style="left:312.40px;top:523.50px;width:0.50px;height:7.50px;background:#e8e8e8;"></div>
<div class="t" style="left:317.70px;transform:scaleX(0.8929);transform-origin:0 0;top:525.22px;font-size:6.75px;line-height:6.75px;color:#1e3a6e;-webkit-text-stroke:0.08px #1e3a6e;">Выбран 1 элемент: 275 байт</div>
<div class="b" style="left:401.00px;top:523.50px;width:0.50px;height:7.50px;background:#eeeeee;"></div>
<div class="b" style="left:668.00px;top:521.00px;width:11.80px;height:11.80px;background:#d9efff;border:0.6px solid #6cb8f0;box-sizing:border-box;"></div>
<svg class="b" style="left:669.50px;top:522.60px" width="9.00" height="8.50" viewBox="0 0 9 8.5"><rect x="0.5" y="0.5" width="2" height="7.5" fill="#e8a0a0"/><path d="M4 1.5 H8 M4 3.5 H8 M4 5.5 H8 M4 7.5 H8" stroke="#777" stroke-width="0.6"/></svg>
<svg class="b" style="left:681.50px;top:523.50px" width="8.00" height="6.50" viewBox="0 0 8 6.5"><rect x="0.3" y="0.3" width="7.4" height="5.9" fill="#f0e6d0" stroke="#c8b89a" stroke-width="0.5"/><path d="M1 5.5 L3 3 L5 4.5 L7 2.5 V5.5 Z" fill="#2b6e3f"/><rect x="1" y="1" width="6" height="2" fill="#6fb4e8"/></svg>
<div class="b" style="left:0.00px;top:541.20px;width:1000.00px;height:20.80px;background:#053448;"></div>
<svg class="b" style="left:8.20px;top:547.20px" width="9.20" height="9.20" viewBox="0 0 9.2 9.2"><path d="M0 1.3 L3.9 0.75 V4.4 H0 Z M4.4 0.68 L9.2 0 V4.4 H4.4 Z M0 4.9 H3.9 V8.5 L0 7.9 Z M4.4 4.9 H9.2 V9.2 L4.4 8.55 Z" fill="#fff"/></svg>
<svg class="b" style="left:33.20px;top:547.00px" width="9.50" height="9.50" viewBox="0 0 9.5 9.5"><circle cx="5.7" cy="3.7" r="3" stroke="#fff" stroke-width="0.8" fill="none"/><path d="M3.6 5.8 L0.6 8.8" stroke="#fff" stroke-width="0.9"/></svg>
<svg class="b" style="left:56.80px;top:547.60px" width="11.60" height="8.40" viewBox="0 0 11.6 8.4"><rect x="2.4" y="0.5" width="6.8" height="7.4" rx="0.6" stroke="#fff" stroke-width="0.65" fill="none"/><path d="M0.5 1.8 H1.6 V6.6 H0.5 M11.1 1.8 H10 V6.6 H11.1" stroke="#fff" stroke-width="0.6" fill="none"/></svg>
<div class="b" style="left:76.20px;top:541.20px;width:83.80px;height:20.80px;background:#0a5291;"></div>
<div class="b" style="left:76.20px;top:560.40px;width:83.80px;height:1.60px;background:#9fd0f5;"></div>
<svg class="b" style="left:83.80px;top:547.40px" width="7.20" height="9.20" viewBox="0 0 16 20"><rect x="0.6" y="0.6" width="12.6" height="18.8" fill="#f7d25e" stroke="#ecc143" stroke-width="1.2"/><path d="M13.2 9.5 L15.4 11.5 V19.4 H13.2 Z" fill="#efbf3e"/><rect x="2.2" y="2.2" width="9.6" height="15.6" fill="#fde497"/></svg>
<div class="t" style="left:96.00px;transform:scaleX(0.8929);transform-origin:0 0;top:549.47px;font-size:6.83px;line-height:6.83px;color:#fff;-webkit-text-stroke:0.08px #fff;">vfstextures</div>
<svg class="b" style="left:165.80px;top:545.80px" width="11.60" height="11.60" viewBox="0 0 48 48"><circle cx="24" cy="24" r="22" fill="#db4437"/><path d="M24 24 L43.05 35 A22 22 0 0 1 13 43.05 Z" fill="#0f9d58"/><path d="M24 24 L13 43.05 A22 22 0 0 1 4.95 13 L24 13 Z" fill="#0f9d58"/><path d="M24 13 H43.05 A22 22 0 0 1 35 43.05 L24 24 Z" fill="#ffcd40"/><path d="M24 2 A22 22 0 0 1 43.05 13 H24 A11 11 0 0 0 14.5 18.5 L4.95 13 A22 22 0 0 1 24 2 Z" fill="#db4437"/><circle cx="24" cy="24" r="10" fill="#fff"/><circle cx="24" cy="24" r="8" fill="#4285f4"/></svg>
<div class="b" style="left:162.50px;top:560.60px;width:78.50px;height:1.40px;background:#7fa9c4;"></div>
<div class="t" style="left:180.00px;transform:scaleX(0.8929);transform-origin:0 0;top:549.47px;font-size:6.83px;line-height:6.83px;color:#fff;-webkit-text-stroke:0.08px #fff;">ED Forums - Ответ...</div>
<svg class="b" style="left:860.00px;top:546.40px" width="7.00" height="11.00" viewBox="0 0 7 11"><rect x="1" y="3" width="5" height="8" rx="1" stroke="#fff" stroke-width="0.7" fill="none"/><rect x="2" y="0.5" width="3" height="2.5" stroke="#fff" stroke-width="0.6" fill="none"/></svg>
<svg class="b" style="left:871.20px;top:546.80px" width="7.60" height="7.60" viewBox="0 0 12 12"><path d="M1 1.2 L2 1 L6.5 4.6 L9.5 1.8 Q10.6 1 11 1.4 Q11.3 1.9 10.4 2.9 L7.5 5.8 L11 10.4 L10.2 11 L6.2 7.2 L4.4 9 L4.6 10.8 L3.9 11.2 L3 9.2 L1 8.2 L1.3 7.6 L3.2 7.8 L5 6 Z" fill="#fff"/></svg>
<svg class="b" style="left:883.20px;top:546.80px" width="9.20" height="9.20" viewBox="0 0 10 10"><circle cx="5" cy="5.5" r="4.5" fill="#f2d03a"/><circle cx="5" cy="5.5" r="3" fill="#fff"/><circle cx="7" cy="7" r="2.5" fill="#2ea84a"/><path d="M5.8 7 L6.8 8 L8.4 6" stroke="#fff" stroke-width="0.7" fill="none"/></svg>
<svg class="b" style="left:896.80px;top:547.80px" width="7.60" height="7.60" viewBox="0 0 7.6 7.6"><rect x="0" y="0" width="7.6" height="7.6" fill="#0a0a0a"/><rect x="0.8" y="0.8" width="6" height="6" fill="#119a11"/></svg>
<svg class="b" style="left:908.00px;top:547.00px" width="10.00" height="10.00" viewBox="0 0 10 10"><path d="M0.5 3 H2.5 L5 0.8 V9.2 L2.5 7 H0.5 Z" stroke="#fff" stroke-width="0.6" fill="none"/><path d="M6.5 3.5 Q7.5 5 6.5 6.5 M7.8 2.3 Q9.5 5 7.8 7.7" stroke="#999" stroke-width="0.6" fill="none"/></svg>
<svg class="b" style="left:978.40px;top:547.60px" width="9.00" height="9.00" viewBox="0 0 9 9"><path d="M0.5 0.5 H8.5 V6.5 H4 L2.5 8.5 V6.5 H0.5 Z" fill="#fff"/><path d="M2 2.5 H7 M2 4.5 H6" stroke="#053448" stroke-width="0.6"/></svg>
<div class="t" style="left:922.40px;transform:scaleX(0.8929);transform-origin:0 0;top:549.44px;font-size:6.72px;line-height:6.72px;color:#fff;-webkit-text-stroke:0.08px #fff;">РУС</div>
<div class="t" style="left:938.40px;width:33.60px;text-align:center;transform:scaleX(0.8929);transform-origin:50% 0;top:543.84px;font-size:6.72px;line-height:6.72px;color:#fff;-webkit-text-stroke:0.08px #fff;">18:00</div>
<div class="t" style="left:932.80px;width:44.80px;text-align:center;transform:scaleX(0.8929);transform-origin:50% 0;top:553.34px;font-size:6.72px;line-height:6.72px;color:#fff;-webkit-text-stroke:0.08px #fff;">01.05.2018</div>
<div class="b" style="left:995.80px;top:543.20px;width:0.50px;height:18.80px;background:#3f6478;"></div>
</div>
</body></html>
